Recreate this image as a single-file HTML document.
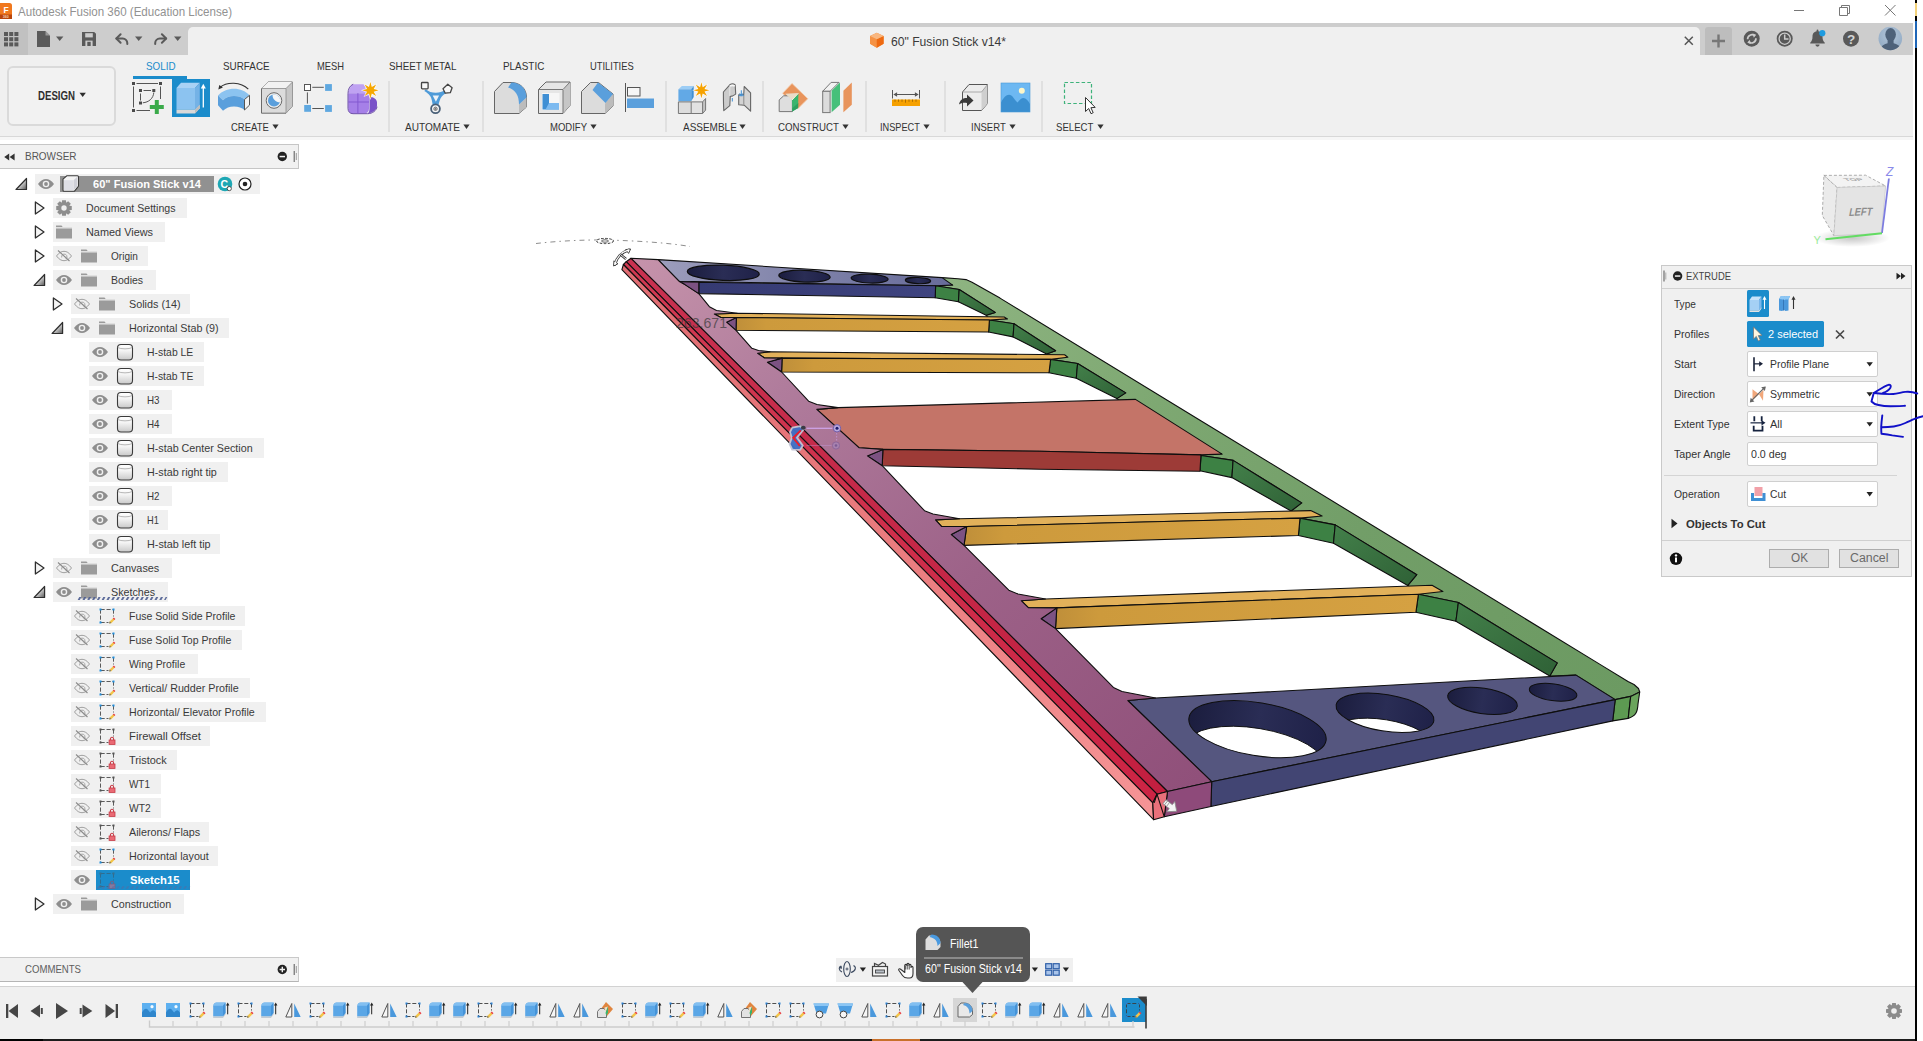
<!DOCTYPE html>
<html><head><meta charset="utf-8"><title>Autodesk Fusion 360</title>
<style>
html,body{margin:0;padding:0;}
body{width:1923px;height:1041px;overflow:hidden;background:#fff;position:relative;font-family:"Liberation Sans",sans-serif;}
.b{position:absolute;display:block;}
.t{position:absolute;white-space:nowrap;transform-origin:0 50%;}
</style></head><body>
<div class="b" style="left:0px;top:0px;width:1914px;height:23px;background:#fff;"></div>
<svg class="b" style="left:0px;top:3px;" width="12" height="16" viewBox="0 0 12 16"><rect x="-3" y="0" width="15" height="16" rx="2.5" fill="#f0781e"/><rect x="-3" y="11.5" width="15" height="4.5" fill="#b9450b"/><text x="3.4" y="9.800" font-size="8.500" font-weight="bold" fill="#fff" font-family="Liberation Sans, sans-serif">F</text><text x="2.800" y="15.200" font-size="3.600" font-weight="bold" fill="#f6d2b8" font-family="Liberation Sans, sans-serif">360</text></svg>
<span class="t" style="left:18px;top:3.0px;font-size:13px;line-height:17px;color:#929292;transform:scaleX(0.8892);">Autodesk Fusion 360 (Education License)</span>
<svg class="b" style="left:1785px;top:0px;" width="125" height="23" viewBox="0 0 125 23"><g stroke="#777" stroke-width="1" fill="none"><path d="M9 10.5h10"/><path d="M54.5 7.5h8v8h-8z"/><path d="M56.5 7.5v-2h8v8h-2"/><path d="M100 5l10.5 10.5M110.5 5l-10.5 10.5"/></g></svg>
<div class="b" style="left:0px;top:23px;width:1913px;height:32px;background:#cdcdcd;"></div>
<div class="b" style="left:0px;top:23px;width:28px;height:32px;background:#c1c1c1;"></div>
<div class="b" style="left:188px;top:27px;width:1512px;height:28px;background:#f0f0f0;border-radius:5px 5px 0 0;"></div>
<svg class="b" style="left:0px;top:27px;" width="190" height="26" viewBox="0 0 190 26">
<g fill="#5a5a5a">
<rect x="4" y="5" width="4" height="4"/><rect x="9.2" y="5" width="4" height="4"/><rect x="14.4" y="5" width="4" height="4"/>
<rect x="4" y="10.2" width="4" height="4"/><rect x="9.2" y="10.2" width="4" height="4"/><rect x="14.4" y="10.2" width="4" height="4"/>
<rect x="4" y="15.4" width="4" height="4"/><rect x="9.2" y="15.4" width="4" height="4"/><rect x="14.4" y="15.4" width="4" height="4"/>
<path d="M37 4h8.5l4.5 4.5v11.5h-13z"/>
<path d="M56 9.5h7.4l-3.7 4.6z"/>
<path d="M82 5h12.2l1.8 1.8v12.2h-14z"/>
<path d="M135 9.5h7.4l-3.7 4.6z"/>
<path d="M174 9.5h7.4l-3.7 4.6z"/>
</g>
<path d="M45.5 4v4.5h4.5" fill="#cdcdcd" opacity=".55"/>
<rect x="85.2" y="6.2" width="7.6" height="4.2" fill="#cdcdcd"/><rect x="85.4" y="13.6" width="7.2" height="5.4" fill="#cdcdcd"/><rect x="87.3" y="14.8" width="3.4" height="4.2" fill="#5a5a5a"/>
<g fill="none" stroke="#5a5a5a" stroke-width="2" stroke-linecap="round" stroke-linejoin="round">
<path d="M116.5 11.5h6.2a4.6 4.6 0 0 1 4.6 4.6v1"/><path d="M120.6 7.3l-4.3 4.2 4.3 4.2"/>
<path d="M166 11.5h-6.2a4.6 4.6 0 0 0-4.6 4.6v1"/><path d="M161.9 7.3l4.3 4.2-4.3 4.2"/>
</g></svg>
<svg class="b" style="left:869.3px;top:32.4px;" width="17" height="17" viewBox="0 0 17 17"><path d="M7.800 .8L14.600 4v7.800L7.800 15.800 1 11.800V4z" fill="#f28a32"/><path d="M1 4l6.800 3.200v8.600L1 11.800z" fill="#f59244"/><path d="M14.600 4L7.800 7.200v8.600l6.800-4z" fill="#ee6a12"/><path d="M7.800 .8L14.600 4 7.800 7.200 1 4z" fill="#f9b780"/></svg>
<span class="t" style="left:890.7px;top:34.2px;font-size:12.5px;line-height:16.5px;color:#3a3a3a;transform:scaleX(0.9714);">60&quot; Fusion Stick v14*</span>
<svg class="b" style="left:1683px;top:35px;" width="12" height="12" viewBox="0 0 12 12"><path d="M1.8 1.8l8 8M9.8 1.8l-8 8" stroke="#555" stroke-width="1.5" fill="none"/></svg>
<div class="b" style="left:1705px;top:27px;width:27px;height:28px;background:#bdbdbd;border-radius:3px 3px 0 0;"></div>
<svg class="b" style="left:1705px;top:27px;" width="27" height="28" viewBox="0 0 27 28"><path d="M13.5 7.5v13M7 14h13" stroke="#777" stroke-width="2.4" fill="none"/></svg>
<svg class="b" style="left:1740px;top:26.4px;" width="172" height="28" viewBox="0 0 172 28">
<circle cx="11.7" cy="12.7" r="8" fill="#595959"/>
<path d="M7.6 13.2a4.3 4.3 0 0 1 7.2-3.3M15.9 12.3a4.3 4.3 0 0 1-7.3 3.4" stroke="#cdcdcd" stroke-width="1.7" fill="none"/><path d="M12.6 7.4l3.6 1.3-2.4 3z" fill="#cdcdcd"/><path d="M10.9 18.1l-3.6-1.3 2.4-3z" fill="#cdcdcd"/>
<circle cx="44.7" cy="12.7" r="8" fill="#595959"/><circle cx="44.7" cy="12.7" r="5.6" fill="none" stroke="#cdcdcd" stroke-width="1.3"/><path d="M44.7 8.6v4.4h3.8" stroke="#cdcdcd" stroke-width="1.5" fill="none"/>
<path d="M77.5 5.2c3.4 0 5 2.4 5 5.4 0 3 .6 4.6 2.3 6.1v.9H70.2v-.9c1.7-1.5 2.3-3.1 2.3-6.1 0-3 1.6-5.4 5-5.4z" fill="#595959"/><path d="M75.4 18.6h4.2a2.1 2.1 0 0 1-4.2 0z" fill="#595959"/><rect x="76.6" y="3.6" width="1.8" height="2.4" rx=".9" fill="#595959"/>
<circle cx="82.3" cy="7.2" r="3.1" fill="#1e9be0"/>
<circle cx="111" cy="12.7" r="8" fill="#595959"/>
<text x="111" y="17.6" text-anchor="middle" font-size="13.5" font-weight="bold" fill="#d4d4d4" font-family="Liberation Sans, sans-serif">?</text>
<defs><radialGradient id="av" cx=".5" cy=".35" r=".7"><stop offset="0" stop-color="#b3c6da"/><stop offset="1" stop-color="#8fa8c2"/></radialGradient><clipPath id="avc"><circle cx="150.3" cy="12.5" r="11.8"/></clipPath></defs>
<circle cx="150.3" cy="12.5" r="11.8" fill="url(#av)"/>
<g clip-path="url(#avc)" fill="#4e627a"><ellipse cx="150.6" cy="8.6" rx="5.3" ry="6.6"/><path d="M147.6 13h6v4.2c3.4.8 5.8 2.2 6.6 4.2v4h-19v-4c.8-2 3-3.4 6.4-4.2z"/></g>
</svg>
<div class="b" style="left:0px;top:55px;width:1913px;height:81px;background:#f0f0f0;"></div>
<div class="b" style="left:0px;top:136px;width:1913px;height:1.2px;background:#d8d8d8;"></div>
<div class="b" style="left:0px;top:137.2px;width:1913px;height:2.6px;background:#f6f6f6;"></div>
<div class="b" style="left:7px;top:66px;width:109px;height:60px;background:#f2f2f2;border:2px solid #dadada;border-radius:6px;box-sizing:border-box;"></div>
<span class="t" style="left:37.5px;top:88.0px;font-size:12px;line-height:16px;color:#2e2e2e;font-weight:bold;transform:scaleX(0.8042);">DESIGN</span>
<svg class="b" style="left:79px;top:92px;" width="8" height="6" viewBox="0 0 8 6"><path d="M0.5 0.8h6.4l-3.2 4.2z" fill="#2e2e2e"/></svg>
<span class="t" style="left:145.5px;top:58.8px;font-size:11.5px;line-height:15.5px;color:#1b8ccb;transform:scaleX(0.8548);">SOLID</span>
<span class="t" style="left:223.4px;top:58.8px;font-size:11.5px;line-height:15.5px;color:#333;transform:scaleX(0.8579);">SURFACE</span>
<span class="t" style="left:316.5px;top:58.8px;font-size:11.5px;line-height:15.5px;color:#333;transform:scaleX(0.8126);">MESH</span>
<span class="t" style="left:389.4px;top:58.8px;font-size:11.5px;line-height:15.5px;color:#333;transform:scaleX(0.8551);">SHEET METAL</span>
<span class="t" style="left:502.5px;top:58.8px;font-size:11.5px;line-height:15.5px;color:#333;transform:scaleX(0.8616);">PLASTIC</span>
<span class="t" style="left:590.3px;top:58.8px;font-size:11.5px;line-height:15.5px;color:#333;transform:scaleX(0.8141);">UTILITIES</span>
<div class="b" style="left:133px;top:76px;width:54px;height:3.4px;background:#1b8ccb;"></div>
<span class="t" style="left:230.6px;top:119.8px;font-size:11.5px;line-height:15.5px;color:#333;transform:scaleX(0.8276);">CREATE</span>
<svg class="b" style="left:271.5px;top:124px;" width="8" height="6" viewBox="0 0 8 6"><path d="M0.4 0.6h6.2l-3.1 4.3z" fill="#333"/></svg>
<span class="t" style="left:404.6px;top:119.8px;font-size:11.5px;line-height:15.5px;color:#333;transform:scaleX(0.8754);">AUTOMATE</span>
<svg class="b" style="left:462.6px;top:124px;" width="8" height="6" viewBox="0 0 8 6"><path d="M0.4 0.6h6.2l-3.1 4.3z" fill="#333"/></svg>
<span class="t" style="left:549.7px;top:119.8px;font-size:11.5px;line-height:15.5px;color:#333;transform:scaleX(0.8274);">MODIFY</span>
<svg class="b" style="left:589.7px;top:124px;" width="8" height="6" viewBox="0 0 8 6"><path d="M0.4 0.6h6.2l-3.1 4.3z" fill="#333"/></svg>
<span class="t" style="left:682.6px;top:119.8px;font-size:11.5px;line-height:15.5px;color:#333;transform:scaleX(0.8677);">ASSEMBLE</span>
<svg class="b" style="left:739.4px;top:124px;" width="8" height="6" viewBox="0 0 8 6"><path d="M0.4 0.6h6.2l-3.1 4.3z" fill="#333"/></svg>
<span class="t" style="left:777.8px;top:119.8px;font-size:11.5px;line-height:15.5px;color:#333;transform:scaleX(0.8422);">CONSTRUCT</span>
<svg class="b" style="left:841.6px;top:124px;" width="8" height="6" viewBox="0 0 8 6"><path d="M0.4 0.6h6.2l-3.1 4.3z" fill="#333"/></svg>
<span class="t" style="left:880.4px;top:119.8px;font-size:11.5px;line-height:15.5px;color:#333;transform:scaleX(0.7985);">INSPECT</span>
<svg class="b" style="left:923.2px;top:124px;" width="8" height="6" viewBox="0 0 8 6"><path d="M0.4 0.6h6.2l-3.1 4.3z" fill="#333"/></svg>
<span class="t" style="left:971.3px;top:119.8px;font-size:11.5px;line-height:15.5px;color:#333;transform:scaleX(0.8269);">INSERT</span>
<svg class="b" style="left:1009px;top:124px;" width="8" height="6" viewBox="0 0 8 6"><path d="M0.4 0.6h6.2l-3.1 4.3z" fill="#333"/></svg>
<span class="t" style="left:1056.4px;top:119.8px;font-size:11.5px;line-height:15.5px;color:#333;transform:scaleX(0.8360);">SELECT</span>
<svg class="b" style="left:1096.8px;top:124px;" width="8" height="6" viewBox="0 0 8 6"><path d="M0.4 0.6h6.2l-3.1 4.3z" fill="#333"/></svg>
<div class="b" style="left:388px;top:81px;width:2px;height:51px;background:#e0e0e0;"></div>
<div class="b" style="left:482px;top:81px;width:2px;height:51px;background:#e0e0e0;"></div>
<div class="b" style="left:665px;top:81px;width:2px;height:51px;background:#e0e0e0;"></div>
<div class="b" style="left:762px;top:81px;width:2px;height:51px;background:#e0e0e0;"></div>
<div class="b" style="left:865px;top:81px;width:2px;height:51px;background:#e0e0e0;"></div>
<div class="b" style="left:944px;top:81px;width:2px;height:51px;background:#e0e0e0;"></div>
<div class="b" style="left:1041px;top:81px;width:2px;height:51px;background:#e0e0e0;"></div>
<div class="b" style="left:172px;top:79px;width:38px;height:38px;background:#1b8ccb;"></div>
<svg class="b" style="left:0px;top:55px;" width="1200" height="82" viewBox="0 55 1200 82"><g stroke="#555" stroke-width="1" fill="none"><path d="M136.500 83.500h21.500M133.500 86.500v21M136.500 110.500h13.500M160.500 86.500v12.500"/><path d="M143.500 90.500h7.500M140.500 93.500v7M153.800 92.500c-.5 6-5 9.800-11 10.300"/></g>
<g fill="#4a4a4a"><rect x="132" y="82" width="3" height="3"/><rect x="159" y="82" width="3" height="3"/><rect x="132" y="109" width="3" height="3"/><rect x="139" y="89" width="3" height="3"/><rect x="152.300" y="89" width="3" height="3"/><rect x="139" y="101.500" width="3" height="3"/></g>
<path d="M154.800 100h4v5h5v4h-5v5h-4v-5h-5v-4h5z" fill="#3aaa4a"/>
<path d="M176.500 88l4.500-5.300h18.800l-4.800 5.300z" fill="#a9d2f5"/><path d="M195 88l4.800-5.300v22l-4.800 5z" fill="#74b2e6"/><rect x="176.500" y="88" width="18.500" height="21.700" fill="#8cc3f0"/>
<path d="M176.500 109.700h18.500l4.800-5v3.600l-4.800 5.200h-18.500z" fill="#d9d9d9"/><path d="M195 109.700l4.800-5v3.600l-4.800 5.200z" fill="#bdbdbd"/>
<path d="M203.300 107.500v-21" stroke="#fff" stroke-width="1.300"/><path d="M200.800 88.600l2.500-4.800 2.500 4.800z" fill="#fff"/>
<path d="M218 95.500c4-4.500 10-6.800 16-6.800s11.500 2.300 15.500 6.600l-5 4.200c-2.500-2.300-6-3.400-10.500-3.400s-8 1.400-11 4.200z" fill="#8cc3f0"/>
<path d="M218 95.500l5 4.800c3-2.800 6.500-4.200 11-4.200s8 1.100 10.500 3.400v10.500c-2.500-2.300-6-3.600-10.500-3.600s-8 1.400-11 4.300l-5-5.400z" fill="#5a9fdc"/>
<path d="M244.500 99.500l5-4.200v9.800l-5 4.900z" fill="#f4f4f4" stroke="#555" stroke-width="1"/>
<path d="M219.800 87.500c7-6 21-6 28.500 1.700" fill="none" stroke="#333" stroke-width="1.100"/><path d="M218.300 89.500l1-4.600 3.600 2.600z" fill="#333"/>
<path d="M261.500 88.500l6.500-6.500h24.500v24l-6.500 7.200h-24.500z" fill="#dcdcdc" stroke="#6a6a6a" stroke-width="1"/><path d="M261.500 88.500l6.500-6.500h24.500l-6.500 6.500z" fill="#f2f2f2"/><path d="M286 88.500l6.500-6.500v24l-6.500 7.200z" fill="#c6c6c6"/><path d="M261.500 88.500h24.500l6.500-6.500M286 88.500v24.500" fill="none" stroke="#8a8a8a" stroke-width=".8"/>
<circle cx="274" cy="100.500" r="7.800" fill="#ececec" stroke="#6a6a6a" stroke-width="1"/><circle cx="274" cy="100.500" r="6" fill="#5a9fdc"/><path d="M272.600 94.700a6 6 0 0 1 7.200 7.600c-4-.2-7.600-3.400-7.200-7.600z" fill="#f6f6f6"/>
<g stroke="#555" stroke-width="1" fill="none"><path d="M312.300 87.300h11.500M307.400 92.400v11.200M312.300 108.500h11.500"/></g><rect x="304.500" y="84.500" width="6" height="6" fill="#fff" stroke="#555"/><rect x="325.100" y="84.100" width="6.800" height="6.800" fill="#5fa8e0"/><rect x="304.200" y="105" width="6.800" height="6.800" fill="#5fa8e0"/><rect x="325.100" y="105.100" width="6.800" height="6.800" fill="#5fa8e0"/>
<path d="M353 84.200h10.500l6.500 9h-21.500c.500-4.500 2-7.500 4.500-9z" fill="#bfa2f2"/>
<path d="M348.300 93.200h20.700v15.500c0 3-2 4.800-5 4.800h-11c-3 0-4.700-2-4.700-5z" fill="#a680e8"/>
<path d="M369.500 96.500c4 .5 7.500 2.500 7.500 6v3c0 4-4 7.500-9.500 8 1.500-1 2-2.500 2-4.800z" fill="#7a52c8"/>
<path d="M353.200 84.200c-3.500 1.500-5.200 5-5.200 9.500v14.800c0 3.200 2 5.200 5 5.200h14.500c5 0 9-3.200 9.500-7" fill="none" stroke="#6d4ea8" stroke-width="1"/>
<path d="M357.900 93.200v20.300M348.300 102h20.700" stroke="#8258d0" stroke-width="1" fill="none"/>
<path d="M370.4 80.7 L372.3 85.7 L377.2 83.5 L375.0 88.4 L380.0 90.3 L375.0 92.2 L377.2 97.1 L372.3 94.9 L370.4 99.9 L368.5 94.9 L363.6 97.1 L365.8 92.2 L360.8 90.3 L365.8 88.4 L363.6 83.5 L368.5 85.7Z" fill="#fff" opacity=".75"/><path d="M370.4 82.1 L371.8 87.0 L376.2 84.5 L373.7 88.9 L378.6 90.3 L373.7 91.7 L376.2 96.1 L371.8 93.6 L370.4 98.5 L369.0 93.6 L364.6 96.1 L367.1 91.7 L362.2 90.3 L367.1 88.9 L364.6 84.5 L369.0 87.0Z" fill="#f6a700"/>
<path d="M425.800 89.300C428.500 91.800 432 92.700 435.800 92.700C439.500 92.700 442.500 91.700 444.600 90.200L446.200 93.200C442.800 94.600 440.600 97.200 439.700 100.500L438.400 105H432.700L431.900 100.500C431.300 96.800 429.200 93.800 424.300 91Z" fill="#4f9bd8"/><path d="M432.700 95.400h6.400l-3.200 6.400z" fill="#eef3f8"/>
<rect x="421.500" y="82.500" width="6.600" height="6.400" rx=".8" fill="#f8f8f8" stroke="#444" stroke-width="1.300"/><path d="M447.800 84.300l4.300 3.400-1.800 5-5 .5-2.300-4.400z" fill="#f8f8f8" stroke="#444" stroke-width="1.300" stroke-linejoin="round"/>
<circle cx="435.500" cy="108.800" r="4.400" fill="#f4f4f4" stroke="#4a6078" stroke-width="1.800"/><circle cx="435.500" cy="108.800" r="1.700" fill="none" stroke="#555" stroke-width=".8"/><path d="M434.300 108.800h2.400M435.500 107.600v2.400" stroke="#555" stroke-width=".6"/>
<path d="M494.500 91.500l8.500-9h8c9 0 15.500 6 15.500 15v9.500l-7.500 6.500h-24.500z" fill="#dcdcdc" stroke="#666" stroke-width="1"/><path d="M519 113.500v-9l7.500-7v9.500z" fill="#bcbcbc"/>
<path d="M508 87.500l3.500-5c9 0 15 6.500 15 15l-7.500 7c0-8.500-3-14.500-11-17z" fill="#5a9fdc"/>
<path d="M538.500 89.500l7.500-7.500h24v23.500l-7 8h-24.500z" fill="#e6e6e6" stroke="#666" stroke-width="1"/><path d="M563 90l7-8v23.500l-7 8z" fill="#c6c6c6"/><path d="M538.500 89.500h24.500l7-7.500M563 90v23" fill="none" stroke="#777" stroke-width="1"/>
<rect x="542" y="93" width="17.500" height="17" fill="#f6f6f6"/><path d="M542.500 94h6.500v9h10v6.500h-16.500z" fill="#3f8fd4"/><path d="M549 103h10v6.500h-13.500z" fill="#7cbaf0"/>
<path d="M581.500 91.500l9-9h8l14.500 11.500v12l-8 7.500h-23.500z" fill="#dcdcdc" stroke="#666" stroke-width="1"/><path d="M605 113.500v-10l8-9.500v12z" fill="#bcbcbc"/><path d="M592.500 90l5.500-7.500 15 11.500-7.500 9z" fill="#5a9fdc"/>
<path d="M625.500 83v29" stroke="#555" stroke-width="1" fill="none"/><rect x="627.500" y="87.500" width="12.500" height="8.500" fill="#f6f6f6" stroke="#555"/><rect x="627" y="98.500" width="27" height="9.500" fill="#5a9fdc"/>
<path d="M678.400 89.300l3.500-3.400h11.800l-2.500 3.400z" fill="#9ccdf5"/><path d="M691.200 89.300l2.500-3.400v11l-2.500 4.300z" fill="#3f8fd4"/><rect x="678.400" y="89.300" width="12.800" height="12" fill="#62a9e6"/>
<rect x="678.400" y="101.900" width="12.800" height="11.600" fill="#dddddd"/><rect x="691.200" y="101.900" width="11.400" height="11.600" fill="#e2e2e2"/><path d="M691.200 101.900l3-3.400h11.400l-3 3.400z" fill="#f0f0f0"/><path d="M702.600 101.900l3-3.400v11.600l-3 3.400z" fill="#c4c4c4"/>
<path d="M678.400 101.900v11.600h24.200l3-3.400v-11.600M691.200 101.900v11.600M678.400 101.900h24.200l3-3.400M702.600 101.900v11.600" fill="none" stroke="#777" stroke-width="1"/>
<path d="M701.4 81.0 L703.2 85.9 L708.0 83.7 L705.8 88.5 L710.7 90.3 L705.8 92.1 L708.0 96.9 L703.2 94.7 L701.4 99.6 L699.6 94.7 L694.8 96.9 L697.0 92.1 L692.1 90.3 L697.0 88.5 L694.8 83.7 L699.6 85.9Z" fill="#fff" opacity=".7"/><path d="M701.4 82.3 L702.7 87.2 L707.1 84.6 L704.5 89.0 L709.4 90.3 L704.5 91.6 L707.1 96.0 L702.7 93.4 L701.4 98.3 L700.1 93.4 L695.7 96.0 L698.3 91.6 L693.4 90.3 L698.3 89.0 L695.7 84.6 L700.1 87.2Z" fill="#f6a200"/>
<path d="M723.400 92l6.400-7.200c1.500-1 4-1 5.400.1l.5 9.200-3.400 2-2 .1-.5 9.400-6 5c-.4-6-.4-12-.4-18.600z" fill="#cbcbcb" stroke="#666" stroke-width="1.100" stroke-linejoin="round"/><path d="M729.800 86.200c1.500-1 3.500-1 5 0" stroke="#f6f6f6" stroke-width="1.600" fill="none"/><path d="M729.800 86.500v9.500" stroke="#e4e4e4" stroke-width="1"/>
<path d="M744.200 86.500l6.400 6.400v18.300l-6.400-6-5.500-.5v-9.900l5 0z" fill="#d3d3d3" stroke="#666" stroke-width="1.100" stroke-linejoin="round"/><path d="M743.800 95v9.800" stroke="#8a8a8a" stroke-width="1"/><path d="M738.700 95.200c1.500.8 3.500.8 5.200 0" stroke="#3f8fd4" stroke-width="1" fill="none"/>
<path d="M741.300 90.300v5M739.600 93.300l1.700 2.200 1.700-2.200M732.300 98v3.500" stroke="#3f8fd4" stroke-width="1" fill="none"/>
<path d="M792 83.400l15.800 15.300-9.800 9.900-15.400-15.300z" fill="#e8945c"/><path d="M792 83.400l15.800 15.300-9.800 9.900-15.400-15.300z" fill="none" stroke="#f3c9a8" stroke-width=".8"/>
<path d="M779.200 99.900l4.500-4.100h7.300l1.400 4v11.800h-13.200z" fill="#dedede" stroke="#777" stroke-width="1"/>
<path d="M785.200 93.800l13-.8-6.200 7z" fill="#e9dcc8"/><path d="M792 100l6.400-6.500-.3 14.500-5.800 3.600z" fill="#3bb56e"/><path d="M798.300 93.300l-6.300 6.700" stroke="#f6f6e0" stroke-width="1"/><path d="M792.300 111.600l5.800-3.600.2-5-6 5.200z" fill="#2da060"/>
<path d="M822.700 91.300l8.400-8.900h7.900l-8.900 8.900z" fill="#f2f2f2" stroke="#777" stroke-width="1" stroke-linejoin="round"/><rect x="822.700" y="91.300" width="7.400" height="21.300" fill="#dcdcdc" stroke="#777" stroke-width="1"/>
<path d="M831.600 90.800l8.400-8.400v22.300l-8.400 7.500z" fill="#46c07a"/><path d="M843.400 90.800l8.400-8.400v22.300l-8.400 7.500z" fill="#e8945c"/>
<rect x="892" y="99.500" width="28" height="6.500" fill="#f6a100"/><g stroke="#a66a00" stroke-width=".9"><path d="M895 99.500v2.300M898.500 99.500v2.300M902 99.500v2.300M905.500 99.500v3.200M909 99.500v2.300M912.500 99.500v2.300M916 99.500v2.300"/></g>
<g stroke="#555" stroke-width="1" fill="none"><path d="M892.500 90v8.500M919.500 90v8.500M894.500 94.500h23"/></g><path d="M893.300 94.500l3.800-2.200v4.400zM918.700 94.500l-3.800-2.200v4.400z" fill="#555"/>
<path d="M962.500 92l6.500-7.500h18.500v19l-6 7h-19z" fill="#ececec" stroke="#555" stroke-width="1"/><path d="M981.500 92l6-7.500v19l-6 7z" fill="#cfcfcf"/><path d="M962.500 92h19l6-7.500" fill="none" stroke="#999" stroke-width=".8"/>
<path d="M959 104.500c1-5 4-6.500 8-6.500v-3.500l6.500 6-6.500 6v-3.500c-3.500-.5-6 0-8 1.500z" fill="#3a3a3a"/>
<rect x="1001" y="83" width="29" height="29" fill="#6db8f2"/><path d="M1001 102.500c2.500-5 5-7.800 8-7.800 3.500 0 5 4.500 8.500 7.800 2-2.500 4-4.500 6-4.500 2.500 0 4.500 2.500 6.500 6v8h-29z" fill="#3b8fd0"/><circle cx="1021.800" cy="90.800" r="3" fill="#fdf6c9"/><rect x="1001" y="83" width="29" height="29" fill="none" stroke="#4a9ad8" stroke-width=".6"/>
<rect x="1064.500" y="82.500" width="27" height="21" fill="none" stroke="#3db27a" stroke-width="1.200" stroke-dasharray="3.500 2.200"/><path d="M1085.500 97.500v14l3.200-3 2.300 5.200 2.200-1-2.300-5 4.300-.3z" fill="#fff" stroke="#333" stroke-width="1"/></svg>
<div class="b" style="left:0px;top:144px;width:299px;height:25px;background:#f1f1f1;border:1px solid #c6c6c6;border-left:none;box-sizing:border-box;"></div>
<svg class="b" style="left:3px;top:152px;" width="13" height="10" viewBox="0 0 13 10"><path d="M6.2 1.6v6.800l-5-3.400zM11.600 1.600v6.800l-5-3.400z" fill="#333"/></svg>
<span class="t" style="left:24.5px;top:149.0px;font-size:11px;line-height:15px;color:#555;transform:scaleX(0.9061);">BROWSER</span>
<svg class="b" style="left:276px;top:150px;" width="24" height="13" viewBox="0 0 24 13"><circle cx="6.300" cy="6.500" r="4.700" fill="#222"/><rect x="3.600" y="5.800" width="5.400" height="1.500" fill="#f1f1f1"/><path d="M18.200 1v11" stroke="#555" stroke-width="1"/><path d="M20.300 3v7" stroke="#999" stroke-width="1"/></svg>
<div class="b" style="left:35px;top:174.3px;width:225px;height:19.5px;background:#f0f0f0;"></div>
<div class="b" style="left:60px;top:176px;width:154px;height:16px;background:#919191;"></div>
<span class="t" style="left:93px;top:176.6px;font-size:11.5px;line-height:15.5px;color:#fff;font-weight:bold;transform:scaleX(0.9626);">60&quot; Fusion Stick v14</span>
<div class="b" style="left:53px;top:198px;width:134.2px;height:19.7px;background:#f0f0f0;"></div>
<span class="t" style="left:86.2px;top:200.6px;font-size:11.5px;line-height:15.5px;color:#3a3a3a;transform:scaleX(0.9211);">Document Settings</span>
<div class="b" style="left:53px;top:222px;width:111.69999999999999px;height:19.7px;background:#f0f0f0;"></div>
<span class="t" style="left:86.2px;top:224.6px;font-size:11.5px;line-height:15.5px;color:#3a3a3a;transform:scaleX(0.9472);">Named Views</span>
<div class="b" style="left:53px;top:246px;width:94.5px;height:19.7px;background:#f0f0f0;"></div>
<span class="t" style="left:111.4px;top:248.6px;font-size:11.5px;line-height:15.5px;color:#3a3a3a;transform:scaleX(0.8736);">Origin</span>
<div class="b" style="left:53px;top:270px;width:102.6px;height:19.7px;background:#f0f0f0;"></div>
<span class="t" style="left:111.4px;top:272.6px;font-size:11.5px;line-height:15.5px;color:#3a3a3a;transform:scaleX(0.9129);">Bodies</span>
<div class="b" style="left:71px;top:294px;width:118.5px;height:19.7px;background:#f0f0f0;"></div>
<span class="t" style="left:129.3px;top:296.6px;font-size:11.5px;line-height:15.5px;color:#3a3a3a;transform:scaleX(0.9387);">Solids (14)</span>
<div class="b" style="left:71px;top:318px;width:158.4px;height:19.7px;background:#f0f0f0;"></div>
<span class="t" style="left:129.3px;top:320.6px;font-size:11.5px;line-height:15.5px;color:#3a3a3a;transform:scaleX(0.9345);">Horizontal Stab (9)</span>
<div class="b" style="left:89px;top:342px;width:114.6px;height:19.7px;background:#f0f0f0;"></div>
<span class="t" style="left:147.2px;top:344.6px;font-size:11.5px;line-height:15.5px;color:#3a3a3a;transform:scaleX(0.9055);">H-stab LE</span>
<div class="b" style="left:89px;top:366px;width:114.6px;height:19.7px;background:#f0f0f0;"></div>
<span class="t" style="left:147.2px;top:368.6px;font-size:11.5px;line-height:15.5px;color:#3a3a3a;transform:scaleX(0.8981);">H-stab TE</span>
<div class="b" style="left:89px;top:390px;width:82.69999999999999px;height:19.7px;background:#f0f0f0;"></div>
<span class="t" style="left:147.2px;top:392.6px;font-size:11.5px;line-height:15.5px;color:#3a3a3a;transform:scaleX(0.8503);">H3</span>
<div class="b" style="left:89px;top:414px;width:82.69999999999999px;height:19.7px;background:#f0f0f0;"></div>
<span class="t" style="left:147.2px;top:416.6px;font-size:11.5px;line-height:15.5px;color:#3a3a3a;transform:scaleX(0.8503);">H4</span>
<div class="b" style="left:89px;top:438px;width:174.8px;height:19.7px;background:#f0f0f0;"></div>
<span class="t" style="left:147.2px;top:440.6px;font-size:11.5px;line-height:15.5px;color:#3a3a3a;transform:scaleX(0.9334);">H-stab Center Section</span>
<div class="b" style="left:89px;top:462px;width:138.6px;height:19.7px;background:#f0f0f0;"></div>
<span class="t" style="left:147.2px;top:464.6px;font-size:11.5px;line-height:15.5px;color:#3a3a3a;transform:scaleX(0.9334);">H-stab right tip</span>
<div class="b" style="left:89px;top:486px;width:82.69999999999999px;height:19.7px;background:#f0f0f0;"></div>
<span class="t" style="left:147.2px;top:488.6px;font-size:11.5px;line-height:15.5px;color:#3a3a3a;transform:scaleX(0.8503);">H2</span>
<div class="b" style="left:89px;top:510px;width:78.69999999999999px;height:19.7px;background:#f0f0f0;"></div>
<span class="t" style="left:147.2px;top:512.5px;font-size:11.5px;line-height:15.5px;color:#3a3a3a;transform:scaleX(0.8027);">H1</span>
<div class="b" style="left:89px;top:534px;width:130.6px;height:19.7px;background:#f0f0f0;"></div>
<span class="t" style="left:147.2px;top:536.5px;font-size:11.5px;line-height:15.5px;color:#3a3a3a;transform:scaleX(0.9388);">H-stab left tip</span>
<div class="b" style="left:53px;top:558px;width:118.69999999999999px;height:19.7px;background:#f0f0f0;"></div>
<span class="t" style="left:111.4px;top:560.5px;font-size:11.5px;line-height:15.5px;color:#3a3a3a;transform:scaleX(0.9445);">Canvases</span>
<div class="b" style="left:53px;top:582px;width:114.69999999999999px;height:19.7px;background:#f0f0f0;"></div>
<span class="t" style="left:111.4px;top:584.5px;font-size:11.5px;line-height:15.5px;color:#3a3a3a;transform:scaleX(0.9323);">Sketches</span>
<div class="b" style="left:71px;top:606px;width:174.4px;height:19.7px;background:#f0f0f0;"></div>
<span class="t" style="left:129.3px;top:608.5px;font-size:11.5px;line-height:15.5px;color:#3a3a3a;transform:scaleX(0.9146);">Fuse Solid Side Profile</span>
<div class="b" style="left:71px;top:630px;width:170.5px;height:19.7px;background:#f0f0f0;"></div>
<span class="t" style="left:129.3px;top:632.5px;font-size:11.5px;line-height:15.5px;color:#3a3a3a;transform:scaleX(0.9162);">Fuse Solid Top Profile</span>
<div class="b" style="left:71px;top:654px;width:126.69999999999999px;height:19.7px;background:#f0f0f0;"></div>
<span class="t" style="left:129.3px;top:656.5px;font-size:11.5px;line-height:15.5px;color:#3a3a3a;transform:scaleX(0.9065);">Wing Profile</span>
<div class="b" style="left:71px;top:678px;width:178.5px;height:19.7px;background:#f0f0f0;"></div>
<span class="t" style="left:129.3px;top:680.5px;font-size:11.5px;line-height:15.5px;color:#3a3a3a;transform:scaleX(0.9327);">Vertical/ Rudder Profile</span>
<div class="b" style="left:71px;top:702px;width:194.7px;height:19.7px;background:#f0f0f0;"></div>
<span class="t" style="left:129.3px;top:704.5px;font-size:11.5px;line-height:15.5px;color:#3a3a3a;transform:scaleX(0.9233);">Horizontal/ Elevator Profile</span>
<div class="b" style="left:71px;top:726px;width:138.7px;height:19.7px;background:#f0f0f0;"></div>
<span class="t" style="left:129.3px;top:728.5px;font-size:11.5px;line-height:15.5px;color:#3a3a3a;transform:scaleX(0.9812);">Firewall Offset</span>
<div class="b" style="left:71px;top:750px;width:106.4px;height:19.7px;background:#f0f0f0;"></div>
<span class="t" style="left:129.3px;top:752.5px;font-size:11.5px;line-height:15.5px;color:#3a3a3a;transform:scaleX(0.9467);">Tristock</span>
<div class="b" style="left:71px;top:774px;width:90.30000000000001px;height:19.7px;background:#f0f0f0;"></div>
<span class="t" style="left:129.3px;top:776.5px;font-size:11.5px;line-height:15.5px;color:#3a3a3a;transform:scaleX(0.8610);">WT1</span>
<div class="b" style="left:71px;top:798px;width:90.30000000000001px;height:19.7px;background:#f0f0f0;"></div>
<span class="t" style="left:129.3px;top:800.5px;font-size:11.5px;line-height:15.5px;color:#3a3a3a;transform:scaleX(0.8939);">WT2</span>
<div class="b" style="left:71px;top:822px;width:138.2px;height:19.7px;background:#f0f0f0;"></div>
<span class="t" style="left:129.3px;top:824.5px;font-size:11.5px;line-height:15.5px;color:#3a3a3a;transform:scaleX(0.9361);">Ailerons/ Flaps</span>
<div class="b" style="left:71px;top:846px;width:146.6px;height:19.7px;background:#f0f0f0;"></div>
<span class="t" style="left:129.3px;top:848.5px;font-size:11.5px;line-height:15.5px;color:#3a3a3a;transform:scaleX(0.9316);">Horizontal layout</span>
<div class="b" style="left:71px;top:870px;width:119px;height:19.7px;background:#f0f0f0;"></div>
<div class="b" style="left:96px;top:870px;width:94px;height:20px;background:#1b8ccb;"></div>
<span class="t" style="left:130.0px;top:872.5px;font-size:11.5px;line-height:15.5px;color:#fff;font-weight:bold;transform:scaleX(0.9781);">Sketch15</span>
<div class="b" style="left:53px;top:894px;width:130.7px;height:19.7px;background:#f0f0f0;"></div>
<span class="t" style="left:111.4px;top:896.5px;font-size:11.5px;line-height:15.5px;color:#3a3a3a;transform:scaleX(0.9309);">Construction</span>
<svg class="b" style="left:0px;top:170px;" width="300" height="760" viewBox="0 170 300 760"><defs><linearGradient id="ge" x1="0" y1="0" x2="1" y2="1"><stop offset=".35" stop-color="#f4f4f4"/><stop offset="1" stop-color="#555"/></linearGradient><linearGradient id="gb" x1="0" y1="0" x2="0" y2="1"><stop offset="0" stop-color="#fff"/><stop offset=".4" stop-color="#f4f4f4"/><stop offset="1" stop-color="#c9c9c9"/></linearGradient></defs><path d="M26.5 178.5v11h-10.500z" fill="url(#ge)" stroke="#2e2e2e" stroke-width="1.200" stroke-linejoin="round"/>
<g transform="translate(46,184)"><path d="M-8 0c2.500-3.600 5.200-5 8-5s5.500 1.400 8 5c-2.500 3.600-5.200 5-8 5s-5.500-1.400-8-5z" fill="#8e8e8e"/><circle r="3.300" fill="#f0f0f0"/><circle r="1.900" fill="#8e8e8e"/></g>
<g transform="translate(70.5,183.7)"><path d="M-7.500-4.500l4-3.500h10.500c.8 0 1 .300 1 1v9.500l-4 5h-10.500c-.7 0-1-.400-1-1z" fill="#f4f4f4" stroke="#3a3a3a" stroke-width="1.100" stroke-linejoin="round"/><path d="M-6.500-3.500h9v10h-9z" fill="#dedfe6"/><path d="M3-3.500l3.800-3.500v9.500l-3.800 4z" fill="#cfd0d8"/></g>
<circle cx="225" cy="184" r="7.300" fill="#1ea7b4"/><text x="224.300" y="188" text-anchor="middle" font-size="10.500" font-weight="bold" fill="#fff" font-family="Liberation Sans, sans-serif">C</text><circle cx="229.300" cy="188.600" r="2.100" fill="#fff" stroke="#333" stroke-width=".8"/>
<circle cx="245" cy="184" r="6" fill="#fff" stroke="#222" stroke-width="1.200"/><circle cx="245" cy="184" r="2.300" fill="#222"/>
<path d="M35.4 202l8.600 6-8.600 6z" fill="#f4f4f4" stroke="#2e2e2e" stroke-width="1.300" stroke-linejoin="round"/>
<path d="M71.77 206.10 L71.77 209.90 L69.25 210.22 L69.28 210.14 L70.84 212.15 L68.15 214.84 L66.14 213.28 L66.22 213.25 L65.90 215.77 L62.10 215.77 L61.78 213.25 L61.86 213.28 L59.85 214.84 L57.16 212.15 L58.72 210.14 L58.75 210.22 L56.23 209.90 L56.23 206.10 L58.75 205.78 L58.72 205.86 L57.16 203.85 L59.85 201.16 L61.86 202.72 L61.78 202.75 L62.10 200.23 L65.90 200.23 L66.22 202.75 L66.14 202.72 L68.15 201.16 L70.84 203.85 L69.28 205.86 L69.25 205.78Z" fill="#8e8e8e"/><circle cx="64" cy="208" r="2.700" fill="#f0f0f0"/>
<path d="M35.4 226l8.600 6-8.600 6z" fill="#f4f4f4" stroke="#2e2e2e" stroke-width="1.300" stroke-linejoin="round"/>
<path d="M56 228.5h16v10h-16z" fill="#9b9b9b"/><path d="M56 225.5h5.500l1.200 1.600h-6.700z" fill="#9b9b9b"/><path d="M56 227.7h16v.8h-16z" fill="#bdbdbd"/>
<path d="M35.4 250l8.600 6-8.600 6z" fill="#f4f4f4" stroke="#2e2e2e" stroke-width="1.300" stroke-linejoin="round"/>
<g transform="translate(64,256)" fill="none" stroke="#a0a0a0" stroke-width="1"><path d="M-7.500 0c2.500-3.400 5-4.700 7.500-4.700s5 1.300 7.500 4.700c-2.500 3.400-5 4.700-7.500 4.700s-5-1.300-7.500-4.700z"/><path d="M-2.300 1.500a2.700 2.700 0 1 1 4 1.600" stroke-width=".9"/><path d="M-6-5.500l11.500 10.500" stroke="#8a8a8a" stroke-width="1.100"/></g>
<path d="M81 252.5h16v10h-16z" fill="#9b9b9b"/><path d="M81 249.5h5.500l1.200 1.600h-6.700z" fill="#9b9b9b"/><path d="M81 251.7h16v.8h-16z" fill="#bdbdbd"/>
<path d="M44.6 274.5v11h-10.500z" fill="url(#ge)" stroke="#2e2e2e" stroke-width="1.200" stroke-linejoin="round"/>
<g transform="translate(64,280)"><path d="M-8 0c2.500-3.600 5.200-5 8-5s5.500 1.400 8 5c-2.500 3.600-5.200 5-8 5s-5.500-1.400-8-5z" fill="#8e8e8e"/><circle r="3.300" fill="#f0f0f0"/><circle r="1.900" fill="#8e8e8e"/></g>
<path d="M81 276.5h16v10h-16z" fill="#9b9b9b"/><path d="M81 273.5h5.500l1.200 1.600h-6.700z" fill="#9b9b9b"/><path d="M81 275.7h16v.8h-16z" fill="#bdbdbd"/>
<path d="M53.4 298l8.600 6-8.600 6z" fill="#f4f4f4" stroke="#2e2e2e" stroke-width="1.300" stroke-linejoin="round"/>
<g transform="translate(82,304)" fill="none" stroke="#a0a0a0" stroke-width="1"><path d="M-7.500 0c2.500-3.400 5-4.700 7.500-4.700s5 1.300 7.500 4.700c-2.500 3.400-5 4.700-7.500 4.700s-5-1.300-7.500-4.700z"/><path d="M-2.300 1.500a2.700 2.700 0 1 1 4 1.600" stroke-width=".9"/><path d="M-6-5.500l11.500 10.500" stroke="#8a8a8a" stroke-width="1.100"/></g>
<path d="M99 300.5h16v10h-16z" fill="#9b9b9b"/><path d="M99 297.5h5.500l1.200 1.600h-6.700z" fill="#9b9b9b"/><path d="M99 299.7h16v.8h-16z" fill="#bdbdbd"/>
<path d="M62.6 322.5v11h-10.500z" fill="url(#ge)" stroke="#2e2e2e" stroke-width="1.200" stroke-linejoin="round"/>
<g transform="translate(82,328)"><path d="M-8 0c2.500-3.600 5.200-5 8-5s5.500 1.400 8 5c-2.500 3.600-5.200 5-8 5s-5.500-1.400-8-5z" fill="#8e8e8e"/><circle r="3.300" fill="#f0f0f0"/><circle r="1.900" fill="#8e8e8e"/></g>
<path d="M99 324.5h16v10h-16z" fill="#9b9b9b"/><path d="M99 321.5h5.500l1.200 1.600h-6.700z" fill="#9b9b9b"/><path d="M99 323.7h16v.8h-16z" fill="#bdbdbd"/>
<g transform="translate(100,352)"><path d="M-8 0c2.500-3.600 5.200-5 8-5s5.500 1.400 8 5c-2.500 3.600-5.200 5-8 5s-5.500-1.400-8-5z" fill="#8e8e8e"/><circle r="3.300" fill="#f0f0f0"/><circle r="1.900" fill="#8e8e8e"/></g>
<g transform="translate(125,352)"><rect x="-7.500" y="-7.500" width="15" height="15.500" rx="3.500" fill="url(#gb)" stroke="#3a3a3a" stroke-width="1.100"/><path d="M-7.300-4.500c3 1.800 11.600 1.800 14.600 0" fill="none" stroke="#9a9a9a" stroke-width=".7"/></g>
<g transform="translate(100,376)"><path d="M-8 0c2.500-3.600 5.200-5 8-5s5.500 1.400 8 5c-2.500 3.600-5.200 5-8 5s-5.500-1.400-8-5z" fill="#8e8e8e"/><circle r="3.300" fill="#f0f0f0"/><circle r="1.900" fill="#8e8e8e"/></g>
<g transform="translate(125,376)"><rect x="-7.500" y="-7.500" width="15" height="15.500" rx="3.500" fill="url(#gb)" stroke="#3a3a3a" stroke-width="1.100"/><path d="M-7.300-4.500c3 1.800 11.600 1.800 14.600 0" fill="none" stroke="#9a9a9a" stroke-width=".7"/></g>
<g transform="translate(100,400)"><path d="M-8 0c2.500-3.600 5.200-5 8-5s5.500 1.400 8 5c-2.500 3.600-5.200 5-8 5s-5.500-1.400-8-5z" fill="#8e8e8e"/><circle r="3.300" fill="#f0f0f0"/><circle r="1.900" fill="#8e8e8e"/></g>
<g transform="translate(125,400)"><rect x="-7.500" y="-7.500" width="15" height="15.500" rx="3.500" fill="url(#gb)" stroke="#3a3a3a" stroke-width="1.100"/><path d="M-7.300-4.500c3 1.800 11.600 1.800 14.600 0" fill="none" stroke="#9a9a9a" stroke-width=".7"/></g>
<g transform="translate(100,424)"><path d="M-8 0c2.500-3.600 5.200-5 8-5s5.500 1.400 8 5c-2.500 3.600-5.200 5-8 5s-5.500-1.400-8-5z" fill="#8e8e8e"/><circle r="3.300" fill="#f0f0f0"/><circle r="1.900" fill="#8e8e8e"/></g>
<g transform="translate(125,424)"><rect x="-7.500" y="-7.500" width="15" height="15.500" rx="3.500" fill="url(#gb)" stroke="#3a3a3a" stroke-width="1.100"/><path d="M-7.300-4.500c3 1.800 11.600 1.800 14.600 0" fill="none" stroke="#9a9a9a" stroke-width=".7"/></g>
<g transform="translate(100,448)"><path d="M-8 0c2.500-3.600 5.200-5 8-5s5.500 1.400 8 5c-2.500 3.600-5.200 5-8 5s-5.500-1.400-8-5z" fill="#8e8e8e"/><circle r="3.300" fill="#f0f0f0"/><circle r="1.900" fill="#8e8e8e"/></g>
<g transform="translate(125,448)"><rect x="-7.500" y="-7.500" width="15" height="15.500" rx="3.500" fill="url(#gb)" stroke="#3a3a3a" stroke-width="1.100"/><path d="M-7.300-4.500c3 1.800 11.600 1.800 14.600 0" fill="none" stroke="#9a9a9a" stroke-width=".7"/></g>
<g transform="translate(100,472)"><path d="M-8 0c2.500-3.600 5.200-5 8-5s5.500 1.400 8 5c-2.500 3.600-5.200 5-8 5s-5.500-1.400-8-5z" fill="#8e8e8e"/><circle r="3.300" fill="#f0f0f0"/><circle r="1.900" fill="#8e8e8e"/></g>
<g transform="translate(125,472)"><rect x="-7.500" y="-7.500" width="15" height="15.500" rx="3.500" fill="url(#gb)" stroke="#3a3a3a" stroke-width="1.100"/><path d="M-7.300-4.500c3 1.800 11.600 1.800 14.600 0" fill="none" stroke="#9a9a9a" stroke-width=".7"/></g>
<g transform="translate(100,496)"><path d="M-8 0c2.500-3.600 5.200-5 8-5s5.500 1.400 8 5c-2.500 3.600-5.200 5-8 5s-5.500-1.400-8-5z" fill="#8e8e8e"/><circle r="3.300" fill="#f0f0f0"/><circle r="1.900" fill="#8e8e8e"/></g>
<g transform="translate(125,496)"><rect x="-7.500" y="-7.500" width="15" height="15.500" rx="3.500" fill="url(#gb)" stroke="#3a3a3a" stroke-width="1.100"/><path d="M-7.300-4.500c3 1.800 11.600 1.800 14.600 0" fill="none" stroke="#9a9a9a" stroke-width=".7"/></g>
<g transform="translate(100,520)"><path d="M-8 0c2.500-3.600 5.200-5 8-5s5.500 1.400 8 5c-2.500 3.600-5.200 5-8 5s-5.500-1.400-8-5z" fill="#8e8e8e"/><circle r="3.300" fill="#f0f0f0"/><circle r="1.900" fill="#8e8e8e"/></g>
<g transform="translate(125,520)"><rect x="-7.500" y="-7.500" width="15" height="15.500" rx="3.500" fill="url(#gb)" stroke="#3a3a3a" stroke-width="1.100"/><path d="M-7.300-4.500c3 1.800 11.600 1.800 14.600 0" fill="none" stroke="#9a9a9a" stroke-width=".7"/></g>
<g transform="translate(100,544)"><path d="M-8 0c2.500-3.600 5.200-5 8-5s5.500 1.400 8 5c-2.500 3.600-5.200 5-8 5s-5.500-1.400-8-5z" fill="#8e8e8e"/><circle r="3.300" fill="#f0f0f0"/><circle r="1.900" fill="#8e8e8e"/></g>
<g transform="translate(125,544)"><rect x="-7.500" y="-7.500" width="15" height="15.500" rx="3.500" fill="url(#gb)" stroke="#3a3a3a" stroke-width="1.100"/><path d="M-7.300-4.500c3 1.800 11.600 1.800 14.600 0" fill="none" stroke="#9a9a9a" stroke-width=".7"/></g>
<path d="M35.4 562l8.600 6-8.600 6z" fill="#f4f4f4" stroke="#2e2e2e" stroke-width="1.300" stroke-linejoin="round"/>
<g transform="translate(64,568)" fill="none" stroke="#a0a0a0" stroke-width="1"><path d="M-7.500 0c2.500-3.400 5-4.700 7.500-4.700s5 1.300 7.500 4.700c-2.500 3.400-5 4.700-7.500 4.700s-5-1.300-7.500-4.700z"/><path d="M-2.300 1.500a2.700 2.700 0 1 1 4 1.600" stroke-width=".9"/><path d="M-6-5.500l11.500 10.500" stroke="#8a8a8a" stroke-width="1.100"/></g>
<path d="M81 564.5h16v10h-16z" fill="#9b9b9b"/><path d="M81 561.5h5.500l1.200 1.600h-6.700z" fill="#9b9b9b"/><path d="M81 563.7h16v.8h-16z" fill="#bdbdbd"/>
<path d="M44.6 586.5v11h-10.500z" fill="url(#ge)" stroke="#2e2e2e" stroke-width="1.200" stroke-linejoin="round"/>
<g transform="translate(64,592)"><path d="M-8 0c2.500-3.600 5.200-5 8-5s5.500 1.400 8 5c-2.500 3.600-5.200 5-8 5s-5.500-1.400-8-5z" fill="#8e8e8e"/><circle r="3.300" fill="#f0f0f0"/><circle r="1.900" fill="#8e8e8e"/></g>
<path d="M81 588.5h16v10h-16z" fill="#9b9b9b"/><path d="M81 585.5h5.500l1.200 1.600h-6.700z" fill="#9b9b9b"/><path d="M81 587.7h16v.8h-16z" fill="#bdbdbd"/>
<g transform="translate(82,616)" fill="none" stroke="#a0a0a0" stroke-width="1"><path d="M-7.500 0c2.500-3.400 5-4.700 7.500-4.700s5 1.300 7.500 4.700c-2.500 3.400-5 4.700-7.500 4.700s-5-1.300-7.500-4.700z"/><path d="M-2.300 1.500a2.700 2.700 0 1 1 4 1.600" stroke-width=".9"/><path d="M-6-5.500l11.500 10.500" stroke="#8a8a8a" stroke-width="1.100"/></g>
<g transform="translate(107,616)" opacity="1"><path d="M-6.500-6.500h13M-6.500-6.500v13M-6.500 6.500h8M6.500-6.500v7" fill="none" stroke="#4a4a4a" stroke-width=".9" stroke-dasharray="4.200 1.800"/><g fill="#1f8fe0"><rect x="-7.500" y="-7.500" width="2" height="2"/><rect x="5.500" y="-7.500" width="2" height="2"/><rect x="-7.500" y="5.500" width="2" height="2"/></g><path d="M2.200 7.600l.5-2 3.600-3.600 1.600 1.600-3.600 3.600z" fill="#f3c54a"/><path d="M5.800 2.500l1-1 1.600 1.600-1 1z" fill="#e8404a"/><path d="M2.200 7.600l.5-2 1.500 1.500z" fill="#666"/></g>
<g transform="translate(82,640)" fill="none" stroke="#a0a0a0" stroke-width="1"><path d="M-7.500 0c2.500-3.400 5-4.700 7.500-4.700s5 1.300 7.500 4.700c-2.500 3.400-5 4.700-7.500 4.700s-5-1.300-7.500-4.700z"/><path d="M-2.300 1.500a2.700 2.700 0 1 1 4 1.600" stroke-width=".9"/><path d="M-6-5.500l11.500 10.500" stroke="#8a8a8a" stroke-width="1.100"/></g>
<g transform="translate(107,640)" opacity="1"><path d="M-6.500-6.500h13M-6.500-6.500v13M-6.500 6.500h8M6.500-6.500v7" fill="none" stroke="#4a4a4a" stroke-width=".9" stroke-dasharray="4.200 1.800"/><g fill="#1f8fe0"><rect x="-7.500" y="-7.500" width="2" height="2"/><rect x="5.500" y="-7.500" width="2" height="2"/><rect x="-7.500" y="5.500" width="2" height="2"/></g><path d="M2.200 7.600l.5-2 3.600-3.600 1.600 1.600-3.600 3.600z" fill="#f3c54a"/><path d="M5.800 2.500l1-1 1.600 1.600-1 1z" fill="#e8404a"/><path d="M2.200 7.600l.5-2 1.500 1.500z" fill="#666"/></g>
<g transform="translate(82,664)" fill="none" stroke="#a0a0a0" stroke-width="1"><path d="M-7.500 0c2.500-3.400 5-4.700 7.500-4.700s5 1.300 7.500 4.700c-2.500 3.400-5 4.700-7.500 4.700s-5-1.300-7.500-4.700z"/><path d="M-2.300 1.500a2.700 2.700 0 1 1 4 1.600" stroke-width=".9"/><path d="M-6-5.500l11.500 10.500" stroke="#8a8a8a" stroke-width="1.100"/></g>
<g transform="translate(107,664)" opacity="1"><path d="M-6.500-6.500h13M-6.500-6.500v13M-6.500 6.500h8M6.500-6.500v7" fill="none" stroke="#4a4a4a" stroke-width=".9" stroke-dasharray="4.200 1.800"/><g fill="#1f8fe0"><rect x="-7.500" y="-7.500" width="2" height="2"/><rect x="5.500" y="-7.500" width="2" height="2"/><rect x="-7.500" y="5.500" width="2" height="2"/></g><path d="M2.200 7.600l.5-2 3.600-3.600 1.600 1.600-3.600 3.600z" fill="#f3c54a"/><path d="M5.800 2.500l1-1 1.600 1.600-1 1z" fill="#e8404a"/><path d="M2.200 7.600l.5-2 1.500 1.500z" fill="#666"/></g>
<g transform="translate(82,688)" fill="none" stroke="#a0a0a0" stroke-width="1"><path d="M-7.500 0c2.500-3.400 5-4.700 7.500-4.700s5 1.300 7.500 4.700c-2.500 3.400-5 4.700-7.500 4.700s-5-1.300-7.500-4.700z"/><path d="M-2.300 1.500a2.700 2.700 0 1 1 4 1.600" stroke-width=".9"/><path d="M-6-5.500l11.500 10.500" stroke="#8a8a8a" stroke-width="1.100"/></g>
<g transform="translate(107,688)" opacity="1"><path d="M-6.500-6.500h13M-6.500-6.500v13M-6.500 6.500h8M6.500-6.500v7" fill="none" stroke="#4a4a4a" stroke-width=".9" stroke-dasharray="4.200 1.800"/><g fill="#1f8fe0"><rect x="-7.500" y="-7.500" width="2" height="2"/><rect x="5.500" y="-7.500" width="2" height="2"/><rect x="-7.500" y="5.500" width="2" height="2"/></g><path d="M2.200 7.600l.5-2 3.600-3.600 1.600 1.600-3.600 3.600z" fill="#f3c54a"/><path d="M5.800 2.500l1-1 1.600 1.600-1 1z" fill="#e8404a"/><path d="M2.200 7.600l.5-2 1.500 1.500z" fill="#666"/></g>
<g transform="translate(82,712)" fill="none" stroke="#a0a0a0" stroke-width="1"><path d="M-7.500 0c2.500-3.400 5-4.700 7.500-4.700s5 1.300 7.500 4.700c-2.500 3.400-5 4.700-7.500 4.700s-5-1.300-7.500-4.700z"/><path d="M-2.300 1.500a2.700 2.700 0 1 1 4 1.600" stroke-width=".9"/><path d="M-6-5.500l11.500 10.500" stroke="#8a8a8a" stroke-width="1.100"/></g>
<g transform="translate(107,712)" opacity="1"><path d="M-6.500-6.500h13M-6.500-6.500v13M-6.500 6.500h8M6.500-6.500v7" fill="none" stroke="#4a4a4a" stroke-width=".9" stroke-dasharray="4.200 1.800"/><g fill="#1f8fe0"><rect x="-7.500" y="-7.500" width="2" height="2"/><rect x="5.500" y="-7.500" width="2" height="2"/><rect x="-7.500" y="5.500" width="2" height="2"/></g><path d="M2.200 7.600l.5-2 3.600-3.600 1.600 1.600-3.600 3.600z" fill="#f3c54a"/><path d="M5.800 2.500l1-1 1.600 1.600-1 1z" fill="#e8404a"/><path d="M2.200 7.600l.5-2 1.500 1.500z" fill="#666"/></g>
<g transform="translate(82,736)" fill="none" stroke="#a0a0a0" stroke-width="1"><path d="M-7.500 0c2.500-3.400 5-4.700 7.500-4.700s5 1.300 7.500 4.700c-2.500 3.400-5 4.700-7.500 4.700s-5-1.300-7.500-4.700z"/><path d="M-2.300 1.500a2.700 2.700 0 1 1 4 1.600" stroke-width=".9"/><path d="M-6-5.500l11.500 10.500" stroke="#8a8a8a" stroke-width="1.100"/></g>
<g transform="translate(107,736)" opacity="1"><path d="M-6.500-6.500h13M-6.500-6.500v13M-6.500 6.500h8M6.500-6.500v7" fill="none" stroke="#4a4a4a" stroke-width=".9" stroke-dasharray="4.200 1.800"/><g fill="#555"><rect x="-7.500" y="-7.500" width="2" height="2"/><rect x="5.500" y="-7.500" width="2" height="2"/><rect x="-7.500" y="5.500" width="2" height="2"/></g><path d="M3.400 4.200v-1.300a1.600 1.600 0 0 1 3.200 0v1.300" fill="none" stroke="#c63b46" stroke-width="1.100"/><rect x="2.100" y="4" width="5.900" height="4.400" fill="#ea6a74" stroke="#c63b46" stroke-width=".8"/></g>
<g transform="translate(82,760)" fill="none" stroke="#a0a0a0" stroke-width="1"><path d="M-7.500 0c2.500-3.400 5-4.700 7.500-4.700s5 1.300 7.500 4.700c-2.500 3.400-5 4.700-7.500 4.700s-5-1.300-7.500-4.700z"/><path d="M-2.300 1.500a2.700 2.700 0 1 1 4 1.600" stroke-width=".9"/><path d="M-6-5.500l11.500 10.500" stroke="#8a8a8a" stroke-width="1.100"/></g>
<g transform="translate(107,760)" opacity="1"><path d="M-6.500-6.500h13M-6.500-6.500v13M-6.500 6.500h8M6.500-6.500v7" fill="none" stroke="#4a4a4a" stroke-width=".9" stroke-dasharray="4.200 1.800"/><g fill="#555"><rect x="-7.500" y="-7.500" width="2" height="2"/><rect x="5.500" y="-7.500" width="2" height="2"/><rect x="-7.500" y="5.500" width="2" height="2"/></g><path d="M3.400 4.200v-1.300a1.600 1.600 0 0 1 3.200 0v1.300" fill="none" stroke="#c63b46" stroke-width="1.100"/><rect x="2.100" y="4" width="5.900" height="4.400" fill="#ea6a74" stroke="#c63b46" stroke-width=".8"/></g>
<g transform="translate(82,784)" fill="none" stroke="#a0a0a0" stroke-width="1"><path d="M-7.500 0c2.500-3.400 5-4.700 7.500-4.700s5 1.300 7.500 4.700c-2.500 3.400-5 4.700-7.500 4.700s-5-1.300-7.500-4.700z"/><path d="M-2.300 1.500a2.700 2.700 0 1 1 4 1.600" stroke-width=".9"/><path d="M-6-5.500l11.500 10.500" stroke="#8a8a8a" stroke-width="1.100"/></g>
<g transform="translate(107,784)" opacity="1"><path d="M-6.500-6.500h13M-6.500-6.500v13M-6.500 6.500h8M6.500-6.500v7" fill="none" stroke="#4a4a4a" stroke-width=".9" stroke-dasharray="4.200 1.800"/><g fill="#555"><rect x="-7.500" y="-7.500" width="2" height="2"/><rect x="5.500" y="-7.500" width="2" height="2"/><rect x="-7.500" y="5.500" width="2" height="2"/></g><path d="M3.400 4.200v-1.300a1.600 1.600 0 0 1 3.200 0v1.300" fill="none" stroke="#c63b46" stroke-width="1.100"/><rect x="2.100" y="4" width="5.900" height="4.400" fill="#ea6a74" stroke="#c63b46" stroke-width=".8"/></g>
<g transform="translate(82,808)" fill="none" stroke="#a0a0a0" stroke-width="1"><path d="M-7.500 0c2.500-3.400 5-4.700 7.500-4.700s5 1.300 7.500 4.700c-2.500 3.400-5 4.700-7.500 4.700s-5-1.300-7.500-4.700z"/><path d="M-2.300 1.500a2.700 2.700 0 1 1 4 1.600" stroke-width=".9"/><path d="M-6-5.500l11.500 10.500" stroke="#8a8a8a" stroke-width="1.100"/></g>
<g transform="translate(107,808)" opacity="1"><path d="M-6.500-6.500h13M-6.500-6.500v13M-6.500 6.500h8M6.500-6.500v7" fill="none" stroke="#4a4a4a" stroke-width=".9" stroke-dasharray="4.200 1.800"/><g fill="#555"><rect x="-7.500" y="-7.500" width="2" height="2"/><rect x="5.500" y="-7.500" width="2" height="2"/><rect x="-7.500" y="5.500" width="2" height="2"/></g><path d="M3.400 4.200v-1.300a1.600 1.600 0 0 1 3.200 0v1.300" fill="none" stroke="#c63b46" stroke-width="1.100"/><rect x="2.100" y="4" width="5.900" height="4.400" fill="#ea6a74" stroke="#c63b46" stroke-width=".8"/></g>
<g transform="translate(82,832)" fill="none" stroke="#a0a0a0" stroke-width="1"><path d="M-7.500 0c2.500-3.400 5-4.700 7.500-4.700s5 1.300 7.500 4.700c-2.500 3.400-5 4.700-7.500 4.700s-5-1.300-7.500-4.700z"/><path d="M-2.300 1.500a2.700 2.700 0 1 1 4 1.600" stroke-width=".9"/><path d="M-6-5.500l11.500 10.500" stroke="#8a8a8a" stroke-width="1.100"/></g>
<g transform="translate(107,832)" opacity="1"><path d="M-6.500-6.500h13M-6.500-6.500v13M-6.500 6.500h8M6.500-6.500v7" fill="none" stroke="#4a4a4a" stroke-width=".9" stroke-dasharray="4.200 1.800"/><g fill="#555"><rect x="-7.500" y="-7.500" width="2" height="2"/><rect x="5.500" y="-7.500" width="2" height="2"/><rect x="-7.500" y="5.500" width="2" height="2"/></g><path d="M3.400 4.200v-1.300a1.600 1.600 0 0 1 3.200 0v1.300" fill="none" stroke="#c63b46" stroke-width="1.100"/><rect x="2.100" y="4" width="5.900" height="4.400" fill="#ea6a74" stroke="#c63b46" stroke-width=".8"/></g>
<g transform="translate(82,856)" fill="none" stroke="#a0a0a0" stroke-width="1"><path d="M-7.500 0c2.500-3.400 5-4.700 7.500-4.700s5 1.300 7.500 4.700c-2.500 3.400-5 4.700-7.500 4.700s-5-1.300-7.500-4.700z"/><path d="M-2.300 1.500a2.700 2.700 0 1 1 4 1.600" stroke-width=".9"/><path d="M-6-5.500l11.500 10.500" stroke="#8a8a8a" stroke-width="1.100"/></g>
<g transform="translate(107,856)" opacity="1"><path d="M-6.500-6.500h13M-6.500-6.500v13M-6.500 6.500h8M6.500-6.500v7" fill="none" stroke="#4a4a4a" stroke-width=".9" stroke-dasharray="4.200 1.800"/><g fill="#1f8fe0"><rect x="-7.500" y="-7.500" width="2" height="2"/><rect x="5.500" y="-7.500" width="2" height="2"/><rect x="-7.500" y="5.500" width="2" height="2"/></g><path d="M2.200 7.600l.5-2 3.600-3.600 1.600 1.600-3.600 3.600z" fill="#f3c54a"/><path d="M5.800 2.500l1-1 1.600 1.600-1 1z" fill="#e8404a"/><path d="M2.200 7.600l.5-2 1.500 1.500z" fill="#666"/></g>
<g transform="translate(82,880)"><path d="M-8 0c2.500-3.600 5.200-5 8-5s5.500 1.400 8 5c-2.500 3.600-5.200 5-8 5s-5.500-1.400-8-5z" fill="#8e8e8e"/><circle r="3.300" fill="#f0f0f0"/><circle r="1.900" fill="#8e8e8e"/></g>
<g transform="translate(107,880)" opacity="0.5"><path d="M-6.500-6.500h13M-6.500-6.500v13M-6.500 6.500h8M6.500-6.500v7" fill="none" stroke="#4a4a4a" stroke-width=".9" stroke-dasharray="4.200 1.800"/><g fill="#555"><rect x="-7.500" y="-7.500" width="2" height="2"/><rect x="5.500" y="-7.500" width="2" height="2"/><rect x="-7.500" y="5.500" width="2" height="2"/></g><path d="M3.400 4.200v-1.300a1.600 1.600 0 0 1 3.200 0v1.300" fill="none" stroke="#c63b46" stroke-width="1.100"/><rect x="2.100" y="4" width="5.900" height="4.400" fill="#ea6a74" stroke="#c63b46" stroke-width=".8"/></g>
<path d="M35.4 898l8.600 6-8.600 6z" fill="#f4f4f4" stroke="#2e2e2e" stroke-width="1.300" stroke-linejoin="round"/>
<g transform="translate(64,904)"><path d="M-8 0c2.500-3.600 5.200-5 8-5s5.500 1.400 8 5c-2.500 3.600-5.200 5-8 5s-5.500-1.400-8-5z" fill="#8e8e8e"/><circle r="3.300" fill="#f0f0f0"/><circle r="1.900" fill="#8e8e8e"/></g>
<path d="M81 900.5h16v10h-16z" fill="#9b9b9b"/><path d="M81 897.5h5.500l1.200 1.600h-6.700z" fill="#9b9b9b"/><path d="M81 899.7h16v.8h-16z" fill="#bdbdbd"/>
<path d="M424 598.500h88" stroke="#4f5f92" stroke-width="2.800" stroke-dasharray="2.200 2.600" fill="none" opacity=".9" transform="skewX(-30)"/>
<path d="M610 887.500h92" stroke="#5a6aa0" stroke-width="2.600" stroke-dasharray="2.200 2.600" fill="none" opacity=".55" transform="skewX(-30)"/></svg>
<svg class="b" style="left:500px;top:220px;" width="1180" height="620" viewBox="500 220 1180 620"><defs>
<linearGradient id="gPur" gradientUnits="userSpaceOnUse" x1="640" y1="260" x2="1180" y2="800"><stop offset="0" stop-color="#c592aa"/><stop offset=".25" stop-color="#b07c9c"/><stop offset=".6" stop-color="#9d6288"/><stop offset="1" stop-color="#90507a"/></linearGradient>
<linearGradient id="gPink" gradientUnits="userSpaceOnUse" x1="622" y1="267" x2="1155" y2="815"><stop offset="0" stop-color="#e06c72"/><stop offset=".5" stop-color="#ea7c7e"/><stop offset="1" stop-color="#f59496"/></linearGradient>
<linearGradient id="gRed1" gradientUnits="userSpaceOnUse" x1="622" y1="267" x2="1155" y2="800"><stop offset="0" stop-color="#d03a52"/><stop offset="1" stop-color="#cc2444"/></linearGradient>
<linearGradient id="gRed2" gradientUnits="userSpaceOnUse" x1="622" y1="267" x2="1155" y2="800"><stop offset="0" stop-color="#c83250"/><stop offset="1" stop-color="#c21f40"/></linearGradient>
<linearGradient id="gNavT" gradientUnits="userSpaceOnUse" x1="660" y1="260" x2="950" y2="282"><stop offset="0" stop-color="#9c9dbc"/><stop offset=".5" stop-color="#7f82a9"/><stop offset="1" stop-color="#686c9a"/></linearGradient>
<linearGradient id="gNavF" gradientUnits="userSpaceOnUse" x1="700" y1="290" x2="936" y2="292"><stop offset="0" stop-color="#353a72"/><stop offset="1" stop-color="#3f4480"/></linearGradient>
<linearGradient id="gYel" x1="0" y1="0" x2="1" y2="0"><stop offset="0" stop-color="#bf8f3a"/><stop offset=".12" stop-color="#cd9a3c"/><stop offset="1" stop-color="#d5a142"/></linearGradient>
<linearGradient id="gGus" x1="0" y1="0" x2="1" y2="1"><stop offset="0" stop-color="#43804a"/><stop offset="1" stop-color="#2f6136"/></linearGradient>
<linearGradient id="gHole" x1="0" y1="0" x2="1" y2="0"><stop offset="0" stop-color="#1b1d3e"/><stop offset=".5" stop-color="#2a2d55"/><stop offset="1" stop-color="#1f2148"/></linearGradient>
<linearGradient id="gGreen" gradientUnits="userSpaceOnUse" x1="950" y1="280" x2="1630" y2="700"><stop offset="0" stop-color="#8eb481"/><stop offset=".3" stop-color="#7ea872"/><stop offset=".6" stop-color="#729e68"/><stop offset="1" stop-color="#6c9a62"/></linearGradient>
</defs>
<polygon points="942.0,277.6 958.0,278.8 966.0,279.6 972.0,282.2 1000.0,298.1 1200.0,420.2 1400.0,542.3 1600.0,664.4 1628.0,681.5 1634.0,684.5 1638.5,688.5 1639.7,692.0 1630.7,696.4 1615.2,699.6 1576.0,675.1 1549.8,676.0 1557.2,662.9 1458.4,602.5 1418.4,594.3 1407.8,585.4 1416.8,574.7 1335.2,524.9 1300.0,518.1 1291.1,511.0 1301.7,502.9 1233.1,460.4 1201.2,455.5 1116.8,398.6 1125.7,392.9 1077.6,363.5 1050.6,359.4 1046.6,354.0 1055.6,350.8 1014.0,323.8 989.4,320.0 986.2,315.3 995.2,312.4 959.2,289.5 935.6,285.8 940.0,281.0" fill="url(#gGreen)" stroke="#0e0e0e" stroke-width="1.1" stroke-linejoin="round" />
<polygon points="1615.2,699.6 1630.7,696.4 1628.2,718.4 1612.7,720.9" fill="#5d9a52" stroke="#0e0e0e" stroke-width="1.1" stroke-linejoin="round" />
<path d="M1630.7 696.4L1639.700 692L1638 704C1637.500 712 1636 716 1628.200 718.400Z" fill="#6aa45c" stroke="#0e0e0e" stroke-width="1.1" stroke-linejoin="round" />
<polygon points="935.6,285.8 959.2,289.5 958.4,301.8 935.2,297.7" fill="#3d8144" stroke="#0e0e0e" stroke-width="1.1" stroke-linejoin="round" />
<polygon points="959.2,289.5 995.2,312.4 986.2,315.3 958.4,301.8" fill="url(#gGus)" stroke="#0e0e0e" stroke-width="1.1" stroke-linejoin="round" />
<polygon points="989.4,320.0 1014.0,323.8 1013.1,336.9 988.6,332.0" fill="#3d8144" stroke="#0e0e0e" stroke-width="1.1" stroke-linejoin="round" />
<polygon points="1014.0,323.8 1055.6,350.8 1046.6,354.0 1013.1,336.9" fill="url(#gGus)" stroke="#0e0e0e" stroke-width="1.1" stroke-linejoin="round" />
<polygon points="1050.6,359.4 1077.6,363.5 1076.3,378.2 1049.0,372.8" fill="#3d8144" stroke="#0e0e0e" stroke-width="1.1" stroke-linejoin="round" />
<polygon points="1077.6,363.5 1125.7,392.9 1116.8,398.6 1076.3,378.2" fill="url(#gGus)" stroke="#0e0e0e" stroke-width="1.1" stroke-linejoin="round" />
<polygon points="1201.2,455.5 1233.1,460.4 1231.9,477.6 1199.9,470.7" fill="#3d8144" stroke="#0e0e0e" stroke-width="1.1" stroke-linejoin="round" />
<polygon points="1233.1,460.4 1301.7,502.9 1291.1,511.0 1231.9,477.6" fill="url(#gGus)" stroke="#0e0e0e" stroke-width="1.1" stroke-linejoin="round" />
<polygon points="1300.0,518.1 1335.2,524.9 1333.5,543.2 1298.4,535.5" fill="#3d8144" stroke="#0e0e0e" stroke-width="1.1" stroke-linejoin="round" />
<polygon points="1335.2,524.9 1416.8,574.7 1407.8,585.4 1333.5,543.2" fill="url(#gGus)" stroke="#0e0e0e" stroke-width="1.1" stroke-linejoin="round" />
<polygon points="1418.4,594.3 1458.4,602.5 1455.9,621.2 1415.9,612.3" fill="#3d8144" stroke="#0e0e0e" stroke-width="1.1" stroke-linejoin="round" />
<polygon points="1458.4,602.5 1557.2,662.9 1549.8,676.0 1455.9,621.2" fill="url(#gGus)" stroke="#0e0e0e" stroke-width="1.1" stroke-linejoin="round" />
<polygon points="658.0,259.6 942.0,277.6 952.7,285.1 935.6,285.8 679.2,281.3" fill="url(#gNavT)" stroke="#0e0e0e" stroke-width="1.1" stroke-linejoin="round" />
<polygon points="698.8,282.2 935.6,285.8 935.2,297.7 698.8,293.6" fill="url(#gNavF)" stroke="#0e0e0e" stroke-width="1.1" stroke-linejoin="round" />
<ellipse cx="723.3" cy="272.8" rx="36" ry="7.6" transform="rotate(2.2 723.3 272.8)" fill="url(#gHole)" stroke="#0e0e0e" stroke-width="1.2"/>
<ellipse cx="804.5" cy="276.2" rx="25.7" ry="5.9" transform="rotate(2.2 804.5 276.2)" fill="url(#gHole)" stroke="#0e0e0e" stroke-width="1.2"/>
<ellipse cx="869.6" cy="278.6" rx="18.5" ry="4.4" transform="rotate(2.2 869.6 278.6)" fill="url(#gHole)" stroke="#0e0e0e" stroke-width="1.2"/>
<ellipse cx="918" cy="280.6" rx="12.7" ry="3.1" transform="rotate(2.2 918 280.6)" fill="url(#gHole)" stroke="#0e0e0e" stroke-width="1.2"/>
<polygon points="714.3,314.0 737.2,313.2 1004.2,317.0 1007.4,318.9 989.4,320.0 736.4,317.5 720.9,317.5" fill="#e2b15a" stroke="#0e0e0e" stroke-width="1.1" stroke-linejoin="round" />
<polygon points="736.4,317.5 989.4,320.0 988.6,332.0 736.0,330.3" fill="url(#gYel)" stroke="#0e0e0e" stroke-width="1.1" stroke-linejoin="round" />
<polygon points="726.6,322.2 736.4,317.5 736.0,330.3" fill="#7c5282" stroke="#0e0e0e" stroke-width="1.1" stroke-linejoin="round" />
<polygon points="757.6,353.2 770.0,351.8 1064.6,354.8 1067.8,357.3 1050.6,359.4 782.1,358.1 764.5,358.0" fill="#e2b15a" stroke="#0e0e0e" stroke-width="1.1" stroke-linejoin="round" />
<polygon points="782.1,358.1 1050.6,359.4 1049.0,372.8 781.6,372.0" fill="url(#gYel)" stroke="#0e0e0e" stroke-width="1.1" stroke-linejoin="round" />
<polygon points="767.4,362.2 782.1,358.1 781.6,372.0" fill="#7c5282" stroke="#0e0e0e" stroke-width="1.1" stroke-linejoin="round" />
<polygon points="935.5,519.9 959.5,518.8 1310.7,510.6 1322.1,516.0 1300.0,518.1 966.7,526.5 941.5,526.4" fill="#e2b15a" stroke="#0e0e0e" stroke-width="1.1" stroke-linejoin="round" />
<polygon points="966.7,526.5 1300.0,518.1 1298.4,535.5 964.0,545.4" fill="url(#gYel)" stroke="#0e0e0e" stroke-width="1.1" stroke-linejoin="round" />
<polygon points="951.3,534.6 966.7,526.5 964.0,545.4" fill="#7c5282" stroke="#0e0e0e" stroke-width="1.1" stroke-linejoin="round" />
<polygon points="1021.2,600.7 1045.5,599.0 1432.0,585.2 1442.9,591.5 1418.4,594.3 1056.8,607.9 1028.6,607.8" fill="#e2b15a" stroke="#0e0e0e" stroke-width="1.1" stroke-linejoin="round" />
<polygon points="1056.8,607.9 1418.4,594.3 1415.9,612.3 1055.5,628.6" fill="url(#gYel)" stroke="#0e0e0e" stroke-width="1.1" stroke-linejoin="round" />
<polygon points="1041.1,618.8 1056.8,607.9 1055.5,628.6" fill="#7c5282" stroke="#0e0e0e" stroke-width="1.1" stroke-linejoin="round" />
<polygon points="816.8,409.4 838.0,407.6 1135.5,399.4 1222.1,454.1 1200.9,454.9 1040.0,451.2 882.9,449.4 859.2,447.8" fill="#c47468" stroke="#0e0e0e" stroke-width="1.1" stroke-linejoin="round" />
<polygon points="882.9,449.4 1040.0,451.2 1200.9,454.9 1200.0,471.3 1040.0,469.2 882.2,465.7" fill="#9d3b37" stroke="#0e0e0e" stroke-width="1.1" stroke-linejoin="round" />
<polygon points="867.4,455.9 882.9,449.4 882.2,465.7" fill="#7c5282" stroke="#0e0e0e" stroke-width="1.1" stroke-linejoin="round" />
<polygon points="1127.8,700.5 1155.6,698.0 1576.0,675.1 1615.2,699.6 1211.7,781.7" fill="#55567f" stroke="#0e0e0e" stroke-width="1.1" stroke-linejoin="round" />
<polygon points="1211.7,781.7 1615.2,699.6 1612.7,720.9 1210.9,806.5" fill="#424573" stroke="#0e0e0e" stroke-width="1.1" stroke-linejoin="round" />
<g transform="rotate(9.5 1257.5 729.2)"><clipPath id="hc1257"><ellipse cx="1257.5" cy="729.2" rx="69.5" ry="26.5"/></clipPath><ellipse cx="1257.5" cy="729.2" rx="69.5" ry="26.5" fill="url(#gHole)"/><g clip-path="url(#hc1257)"><ellipse cx="1260.0" cy="754.7" rx="69.5" ry="26.5" fill="#fff" stroke="#0e0e0e" stroke-width=".9"/></g><ellipse cx="1257.5" cy="729.2" rx="69.5" ry="26.5" fill="none" stroke="#0e0e0e" stroke-width="1"/></g>
<g transform="rotate(9.2 1385 712.8)"><clipPath id="hc1385"><ellipse cx="1385" cy="712.8" rx="49.5" ry="18.3"/></clipPath><ellipse cx="1385" cy="712.8" rx="49.5" ry="18.3" fill="url(#gHole)"/><g clip-path="url(#hc1385)"><ellipse cx="1387.5" cy="737.8" rx="49.5" ry="18.3" fill="#fff" stroke="#0e0e0e" stroke-width=".9"/></g><ellipse cx="1385" cy="712.8" rx="49.5" ry="18.3" fill="none" stroke="#0e0e0e" stroke-width="1"/></g>
<g transform="rotate(8.7 1482.5 700.9)"><clipPath id="hc1482"><ellipse cx="1482.5" cy="700.9" rx="35.2" ry="12.7"/></clipPath><ellipse cx="1482.5" cy="700.9" rx="35.2" ry="12.7" fill="url(#gHole)"/><g clip-path="url(#hc1482)"><ellipse cx="1485.5" cy="730.9" rx="35.2" ry="12.7" fill="#fff" stroke="#0e0e0e" stroke-width=".9"/></g><ellipse cx="1482.5" cy="700.9" rx="35.2" ry="12.7" fill="none" stroke="#0e0e0e" stroke-width="1"/></g>
<g transform="rotate(8 1553.1 692.3)"><clipPath id="hc1553"><ellipse cx="1553.1" cy="692.3" rx="24" ry="8.4"/></clipPath><ellipse cx="1553.1" cy="692.3" rx="24" ry="8.4" fill="url(#gHole)"/><g clip-path="url(#hc1553)"><ellipse cx="1556.1" cy="722.3" rx="24" ry="8.4" fill="#fff" stroke="#0e0e0e" stroke-width=".9"/></g><ellipse cx="1553.1" cy="692.3" rx="24" ry="8.4" fill="none" stroke="#0e0e0e" stroke-width="1"/></g>
<polygon points="631.0,258.3 658.0,259.6 679.2,281.3 685.0,284.6 698.8,293.6 709.4,306.7 716.5,310.5 737.2,313.2 714.3,314.0 720.9,317.5 736.4,317.5 726.6,322.2 736.0,330.3 751.9,348.3 758.5,350.5 770.0,351.8 757.6,353.2 764.5,358.0 782.1,358.1 767.4,362.2 781.6,372.0 808.6,401.2 817.0,404.5 838.0,407.6 816.8,409.4 859.2,447.8 882.9,449.4 867.4,455.9 882.2,465.7 924.5,510.7 933.0,514.0 959.5,518.8 935.5,519.9 941.5,526.4 966.7,526.5 951.3,534.6 964.0,545.4 1008.8,590.2 1018.0,594.0 1045.5,599.0 1021.2,600.7 1028.6,607.8 1056.8,607.9 1041.1,618.8 1055.5,628.6 1113.4,687.4 1122.0,691.5 1155.6,698.0 1127.8,700.5 1211.7,781.7 1167.5,791.5" fill="url(#gPur)" stroke="#0e0e0e" stroke-width="1.1" stroke-linejoin="round" />
<polygon points="679.5,281.6 698.8,282.2 698.8,293.6 685.0,284.6" fill="#7c5282" stroke="#0e0e0e" stroke-width="1.1" stroke-linejoin="round" />
<polygon points="631.0,258.3 1167.5,791.5 1157.0,794.2 626.2,261.7" fill="url(#gRed2)" stroke="#0e0e0e" stroke-width="1.1" stroke-linejoin="round" />
<polygon points="626.2,261.7 1157.0,794.2 1152.8,802.9 623.4,264.5" fill="url(#gRed1)" stroke="#0e0e0e" stroke-width="1.1" stroke-linejoin="round" />
<polygon points="623.4,264.5 1152.8,802.9 1153.6,819.7 621.9,269.6" fill="url(#gPink)" stroke="#0e0e0e" stroke-width="1.1" stroke-linejoin="round" />
<polygon points="1167.5,791.5 1211.7,781.7 1210.9,806.5 1164.3,816.8" fill="#8e4a7a" stroke="#0e0e0e" stroke-width="1.1" stroke-linejoin="round" />
<polygon points="1157.0,794.2 1167.5,791.5 1164.3,816.8 1153.6,819.7 1152.8,802.9" fill="#e8707a" stroke="#0e0e0e" stroke-width="1.1" stroke-linejoin="round" />
<path d="M1157 794.2L1164.300 816.800M1154.200 802.900L1157 794.200" fill="none" stroke="#0e0e0e" stroke-width="1.1" stroke-linejoin="round" />
<path d="M536 243.500c22-2.500 48-3.800 68-3.500s60 2 86 6.500" fill="none" stroke="#555" stroke-width=".9" stroke-dasharray="5 4 1.500 4" opacity=".75"/>
<ellipse cx="605" cy="241" rx="8.500" ry="2.600" fill="#fff" stroke="#333" stroke-width="1" stroke-dasharray="2.500 1.500"/><ellipse cx="605" cy="241" rx="3.500" ry="1.200" fill="none" stroke="#333" stroke-width=".8"/>
<path d="M615 264.500c1-6.500 6.500-12.500 13.800-14.600" fill="none" stroke="#333" stroke-width="2.600" stroke-linecap="round"/><path d="M613.600 266l.3-5.200 4 3zM630.600 249l-5 .6 3 3.800z" fill="#fff" stroke="#333" stroke-width=".9" stroke-linejoin="round"/><path d="M615 264.500c1-6.500 6.500-12.500 13.800-14.600" fill="none" stroke="#fff" stroke-width="1.100" stroke-linecap="round"/><path d="M620.500 254.500l5.500 4.500" stroke="#333" stroke-width="2.400"/><path d="M620.500 254.500l5.500 4.500" stroke="#fff" stroke-width=".9"/>
<text x="676" y="328" font-size="14.500" fill="#3a3a3a" opacity=".7" font-family="Liberation Sans, sans-serif" textLength="51" lengthAdjust="spacingAndGlyphs">263.671</text>
<g><path d="M792.300 427.600L800.200 426.200L803.800 429.200L797 437.600L802.800 445.600L800.200 449.800L792.200 449.600L789.600 444L791.800 437.600L790 432Z" fill="#3f72c8" stroke="#c4c6d6" stroke-width="1.800" stroke-linejoin="round" opacity=".95"/><path d="M800.800 430.400l-7.600 7.400 6.600 8.200" fill="none" stroke="#f01c26" stroke-width="1.900"/><ellipse cx="803.300" cy="427.800" rx="2.400" ry="2" fill="#3a3a44"/><path d="M806.500 428.300h26" stroke="#d2a8f0" stroke-width="1.300" opacity=".9"/><path d="M806.500 445.500h25" stroke="#c9a0e8" stroke-width="1.100" opacity=".35"/><path d="M836.600 433v8.500" stroke="#c9a0e8" stroke-width="1.200" stroke-dasharray="1.500 1.500" opacity=".55"/><circle cx="837" cy="428.300" r="3.700" fill="#b9a8dc" stroke="#6a58a8" stroke-width=".9"/><circle cx="837" cy="428.300" r="1.500" fill="#1c1c6c"/><circle cx="836" cy="445.500" r="3.600" fill="#a888ba" stroke="#7a5a98" stroke-width=".8" opacity=".7"/><circle cx="836" cy="445.500" r="1.300" fill="#6a4a88" opacity=".7"/></g>
<g transform="translate(1170,806) rotate(38)"><path d="M-7-2.500h8v-4l7.500 6.500-7.500 6.500v-4h-8z" fill="#f4f4f4" stroke="#8a8a8a" stroke-width=".8"/><path d="M-5-2.500v5M-2.500-2.500v5" stroke="#8a8a8a" stroke-width=".8"/></g></svg>
<svg class="b" style="left:1800px;top:160px;" width="114" height="95" viewBox="1800 160 114 95"><defs><radialGradient id="vsh"><stop offset="0" stop-color="#000" stop-opacity=".22"/><stop offset="1" stop-color="#000" stop-opacity="0"/></radialGradient></defs><ellipse cx="1852" cy="238" rx="38" ry="9" fill="url(#vsh)"/><path d="M1823.900 175.400L1865.600 175.200L1885.700 186L1837.100 187.500Z" fill="#f3f3f3" stroke="#999" stroke-width=".8" stroke-dasharray="3 2"/><path d="M1823.900 175.400L1837.100 187.500L1833.900 235.600L1822.300 215.500Z" fill="#ebebeb" stroke="#999" stroke-width=".8" stroke-dasharray="3 2"/><path d="M1837.100 187.500L1885.700 186L1881.500 233.500L1833.900 235.600Z" fill="#e4e4e4" stroke="#c0c0c0" stroke-width=".6"/><path d="M1882 233L1888.900 178.500" stroke="#7c7ce0" stroke-width="1.800"/><path d="M1882 233.200L1825.500 239.300" stroke="#62dc62" stroke-width="2"/><text x="1886" y="175.500" font-size="12" font-style="italic" fill="#8a8aea" font-family="Liberation Sans, sans-serif">Z</text><text x="1813.500" y="243.500" font-size="11" fill="#9aeb9a" font-family="Liberation Sans, sans-serif">Y</text><text transform="translate(1848.500,216) skewY(-2) skewX(-12)" font-size="11" font-weight="bold" fill="#8c8c8c" font-family="Liberation Sans, sans-serif" textLength="23" lengthAdjust="spacingAndGlyphs">LEFT</text><text transform="translate(1846,180.500) skewX(50) scale(1,.45)" font-size="9" font-weight="bold" fill="#aaa" font-family="Liberation Sans, sans-serif">TOP</text></svg>
<div class="b" style="left:1661px;top:264.5px;width:250.5px;height:312.5px;background:#f0f0f0;border:1px solid #c9c9c9;box-sizing:border-box;"></div>
<div class="b" style="left:1662px;top:288px;width:248.5px;height:1px;background:#d0d0d0;"></div>
<span class="t" style="left:1686.4px;top:268.8px;font-size:11px;line-height:15px;color:#444;transform:scaleX(0.8561);">EXTRUDE</span>
<span class="t" style="left:1674.3px;top:296.6px;font-size:11.5px;line-height:15.5px;color:#333;transform:scaleX(0.8784);">Type</span>
<span class="t" style="left:1674.3px;top:326.9px;font-size:11.5px;line-height:15.5px;color:#333;transform:scaleX(0.9205);">Profiles</span>
<span class="t" style="left:1674.3px;top:356.9px;font-size:11.5px;line-height:15.5px;color:#333;transform:scaleX(0.9141);">Start</span>
<span class="t" style="left:1674.3px;top:386.9px;font-size:11.5px;line-height:15.5px;color:#333;transform:scaleX(0.9013);">Direction</span>
<span class="t" style="left:1674.3px;top:416.8px;font-size:11.5px;line-height:15.5px;color:#333;transform:scaleX(0.9187);">Extent Type</span>
<span class="t" style="left:1674.3px;top:446.8px;font-size:11.5px;line-height:15.5px;color:#333;transform:scaleX(0.9302);">Taper Angle</span>
<span class="t" style="left:1674.3px;top:486.9px;font-size:11.5px;line-height:15.5px;color:#333;transform:scaleX(0.9049);">Operation</span>
<div class="b" style="left:1746.6px;top:290.4px;width:22.8px;height:26.7px;background:#1b8ccb;border-radius:1.500px;"></div>
<div class="b" style="left:1746.6px;top:320.8px;width:77.8px;height:26.5px;background:#1b8ccb;border-radius:1.500px;"></div>
<span class="t" style="left:1768px;top:326.8px;font-size:11.5px;line-height:15.5px;color:#fff;transform:scaleX(0.9537);">2 selected</span>
<div class="b" style="left:1747px;top:351.3px;width:131px;height:25.69999999999999px;background:#fff;border:1px solid #cfcfcf;border-radius:2px;box-sizing:border-box;"></div>
<span class="t" style="left:1770px;top:356.7px;font-size:11.5px;line-height:15.5px;color:#333;transform:scaleX(0.9048);">Profile Plane</span>
<div class="b" style="left:1747px;top:381.4px;width:131px;height:25.600000000000023px;background:#fff;border:1px solid #cfcfcf;border-radius:2px;box-sizing:border-box;"></div>
<span class="t" style="left:1770px;top:386.8px;font-size:11.5px;line-height:15.5px;color:#333;transform:scaleX(0.9152);">Symmetric</span>
<div class="b" style="left:1747px;top:411.3px;width:131px;height:25.69999999999999px;background:#fff;border:1px solid #cfcfcf;border-radius:2px;box-sizing:border-box;"></div>
<span class="t" style="left:1770px;top:416.7px;font-size:11.5px;line-height:15.5px;color:#333;transform:scaleX(0.9545);">All</span>
<div class="b" style="left:1747px;top:442.2px;width:131px;height:24.3px;background:#fff;border:1px solid #cfcfcf;border-radius:2px;box-sizing:border-box;"></div>
<span class="t" style="left:1750.5px;top:446.8px;font-size:11.5px;line-height:15.5px;color:#333;transform:scaleX(0.9252);">0.0 deg</span>
<div class="b" style="left:1663.5px;top:474.5px;width:233px;height:1px;background:#d4d4d4;"></div>
<div class="b" style="left:1747px;top:481.4px;width:131px;height:25.200000000000045px;background:#fff;border:1px solid #cfcfcf;border-radius:2px;box-sizing:border-box;"></div>
<span class="t" style="left:1770px;top:486.6px;font-size:11.5px;line-height:15.5px;color:#333;transform:scaleX(0.8941);">Cut</span>
<span class="t" style="left:1686.4px;top:516.5px;font-size:11.5px;line-height:15.5px;color:#333;font-weight:bold;transform:scaleX(0.9823);">Objects To Cut</span>
<div class="b" style="left:1662px;top:540px;width:248.5px;height:1px;background:#d0d0d0;"></div>
<div class="b" style="left:1769px;top:549px;width:60px;height:18.8px;background:#e1e1e1;border:1px solid #adadad;box-sizing:border-box;"></div>
<div class="b" style="left:1839.3px;top:549px;width:59.7px;height:18.8px;background:#e1e1e1;border:1px solid #adadad;box-sizing:border-box;"></div>
<span class="t" style="left:1790.5px;top:550.4px;font-size:12.5px;line-height:16.5px;color:#6a6a6a;transform:scaleX(0.9413);">OK</span>
<span class="t" style="left:1849.5px;top:550.4px;font-size:12.5px;line-height:16.5px;color:#6a6a6a;transform:scaleX(0.9894);">Cancel</span>
<svg class="b" style="left:1655px;top:260px;" width="268" height="320" viewBox="1655 260 268 320"><path d="M1664 270.500v11" stroke="#555" stroke-width="1"/><path d="M1665.800 272.500v7" stroke="#aaa" stroke-width="1"/><circle cx="1677.600" cy="276" r="4.700" fill="#222"/><rect x="1674.900" y="275.300" width="5.400" height="1.500" fill="#f0f0f0"/><path d="M1896.500 272.800l4.500 3.300-4.500 3.300zM1901 272.800l4.500 3.300-4.500 3.300z" fill="#222"/><g transform="translate(1757,303.500)"><path d="M-7.500-3.500l2.500-3.500h9.500l-2.500 3.500z" fill="#c9e4fa"/><path d="M2-3.500l2.500-3.500v10.500l-2.500 3.500z" fill="#7ab6ea"/><rect x="-7.500" y="-3.500" width="9.500" height="10.500" fill="#a5d0f5"/><path d="M-7.500 7h9.500l2.500-3.500v1.500l-2.500 3.500h-9.500z" fill="#e3e3e3"/><path d="M7.500-4.500v10" stroke="#fff" stroke-width="1.100"/><path d="M5.500-3.800l2-3.600 2 3.600z" fill="#fff"/></g><g transform="translate(1786,303.500)"><path d="M-7-4.500l2-3h3l1 .8 1.500-.8h3.500l-1.500 3.500v11l-3 .5-1.500-1-2 1-3-.5z" fill="#4a98dc"/><path d="M-7-4.500l2-3h3l1 .8 1.500-.8h3.500l-1.500 3.500h-3l-1.500.8-1.500-.8z" fill="#8cc6f4"/><path d="M-2.500-4v11" stroke="#2f6fb0" stroke-width=".8"/><path d="M7.500-4.500v10" stroke="#333" stroke-width="1.100"/><path d="M5.500-3.800l2-3.600 2 3.600z" fill="#333"/></g><path d="M1753.500 327v12l2.800-2.600 2 4.600 2-.9-2-4.500 3.700-.2z" fill="#fff6df" stroke="#777" stroke-width=".8"/><path d="M1836 330.500l8 8M1844 330.500l-8 8" stroke="#4a4a4a" stroke-width="1.700" fill="none"/><path d="M1866.500 362.15h6.400l-3.200 4.400z" fill="#222"/><g transform="translate(1758,364.15)"><path d="M-4-7v14" stroke="#1a2238" stroke-width="1.600"/><path d="M-4 -.3h6" stroke="#1a2238" stroke-width="1.200"/><path d="M1.200-3l3.800 2.700-3.800 2.700z" fill="#1a2238"/></g><path d="M1866.500 392.2h6.400l-3.200 4.400z" fill="#222"/><g transform="translate(1758,394.2)"><path d="M-5.500-5l6.500 5-6.500 6zM1 0l4.500-4.500-.5 11z" fill="#f0a274" opacity=".95"/><path d="M-7.500 7.500l14.500-14.500" stroke="#666" stroke-width="1.200"/><path d="M7.800-7.800l-4.600.9 3.700 3.700zM-8.200 8.200l4.600-.9-3.700-3.700z" fill="#666"/></g><path d="M1866.500 422.15h6.400l-3.200 4.400z" fill="#222"/><g transform="translate(1758,424.15)"><path d="M-3.700-8v5M3.700-8v5" stroke="#16233f" stroke-width="1.800"/><path d="M-7.500-1.300h12" stroke="#16233f" stroke-width="1.200"/><path d="M3.500-4l4 2.700-4 2.700z" fill="#16233f"/><path d="M-4.300 1.500v5h8.800v-5" fill="none" stroke="#16233f" stroke-width="1.800"/></g><path d="M1866.500 492.0h6.400l-3.200 4.400z" fill="#222"/><g transform="translate(1758,494.0)"><rect x="-3.500" y="-7" width="8" height="9" fill="#f2a0a8"/><path d="M-7-1v8h14.500v-8h-3v5h-8.500v-5z" fill="#3f8fd4"/></g><path d="M1671.500 518.800l6 4.700-6 4.700z" fill="#222"/><circle cx="1676" cy="558.800" r="6.200" fill="#111"/><rect x="1675" y="557.500" width="2" height="4.800" fill="#fff"/><circle cx="1676" cy="555.400" r="1.200" fill="#fff"/></svg>
<div class="b" style="left:0px;top:957px;width:299px;height:25px;background:#f1f1f1;border:1px solid #c9c9c9;border-left:none;border-bottom-color:#b5b5b5;box-sizing:border-box;"></div>
<span class="t" style="left:24.5px;top:961.5px;font-size:11px;line-height:15px;color:#5e5e5e;transform:scaleX(0.8727);">COMMENTS</span>
<svg class="b" style="left:276px;top:963px;" width="24" height="13" viewBox="0 0 24 13"><circle cx="6.300" cy="6.500" r="4.700" fill="#222"/><path d="M3.600 6.500h5.400M6.300 3.800v5.400" stroke="#f1f1f1" stroke-width="1.400"/><path d="M18.200 1v11" stroke="#555" stroke-width="1"/><path d="M20.300 3v7" stroke="#999" stroke-width="1"/></svg>
<div class="b" style="left:836px;top:958px;width:237px;height:24px;background:#f0f0f0;"></div>
<svg class="b" style="left:830px;top:955px;" width="250" height="30" viewBox="830 955 250 30"><g fill="none" stroke="#3c4a60" stroke-width="1.100"><ellipse cx="847" cy="969" rx="3.300" ry="7.500"/><path d="M841 966c-2.500 1-2.500 4.500 1 6M853.500 965.500c3 1.500 2.500 5.500-2.500 7"/><path d="M845.500 969h3M847 967.500v3" stroke-width=".9"/></g><path d="M839.300 968.200l2.200-2.600.6 3.200z" fill="#3c4a60"/><path d="M859.800 967.500h6.200l-3.100 4.300z" fill="#222"/><g fill="none" stroke="#444" stroke-width="1.200"><rect x="872.500" y="966.500" width="15" height="9.500" fill="#f4f4f4"/><path d="M874.500 966.500v-3l4 1.800 4-2.800 3 1.500v2.500"/></g><rect x="875.500" y="970" width="9" height="3" fill="#b9c0c8" stroke="#444" stroke-width=".9"/><path d="M901 969.500c-1.500-1.500-3-.5-2 1l3.500 5c1 1.500 2.500 2.500 5 2.500h2c2.500 0 3.500-2 3.500-4.500v-6c0-1.500-2-1.500-2 0v-2c0-1.500-2-1.500-2 0v-1c0-1.500-2-1.500-2 0v1c0-1.500-2.200-1.500-2.200 0v7z" fill="#fbfbfb" stroke="#333" stroke-width="1.100" stroke-linejoin="round"/><path d="M905.200 965.500v4M907.200 964.500v5M909.200 965.500v4" stroke="#333" stroke-width=".9"/><path d="M1031.800 967.500h6.200l-3.100 4.300z" fill="#222"/><g fill="#a9c4ea" stroke="#2f5fa8" stroke-width="1.200"><rect x="1045.700" y="963.700" width="6" height="5"/><rect x="1053.200" y="963.700" width="6" height="5"/><rect x="1045.700" y="970.200" width="6" height="5"/><rect x="1053.200" y="970.200" width="6" height="5"/></g><path d="M1062.800 967.500h6.200l-3.100 4.300z" fill="#222"/></svg>
<div class="b" style="left:0px;top:986px;width:1915px;height:54px;background:#f0f0f0;border-top:1px solid #d2d2d2;box-sizing:border-box;"></div>
<div class="b" style="left:953px;top:998px;width:24px;height:24px;background:#d6d6d6;"></div>
<div class="b" style="left:1121.5px;top:998px;width:24.5px;height:24px;background:#1b8ccb;"></div>
<svg class="b" style="left:0px;top:990px;" width="1914" height="49" viewBox="0 990 1914 49"><g fill="#464646"><rect x="6" y="1004" width="2.300" height="14"/><path d="M18 1004v14l-9.500-7z"/><path d="M40 1004.500v13l-9.500-6.500z"/><rect x="40.800" y="1008" width="2" height="6"/><path d="M56 1003v16l12-8z"/><path d="M82.500 1004.500v13l9.800-6.500z"/><rect x="79.700" y="1008" width="2" height="6"/><path d="M105.500 1004v14l9.500-7z"/><rect x="115.700" y="1004" width="2.300" height="14"/></g><path d="M149.500 1020.500v6.500h985" fill="none" stroke="#cbcbcb" stroke-width="1.400"/><rect x="142" y="1003" width="14" height="14" fill="#5db0f0"/><path d="M142 1012.500c1.200-2.500 2.500-3.800 4-3.800 1.700 0 2.500 2.200 4.200 3.800 1-1.200 2-2.200 3-2.200s2 1 2.800 2.500v4.200h-14z" fill="#2f86cc"/><circle cx="152" cy="1006.700" r="1.600" fill="#f4fbff"/><path d="M173 1021v5.500" stroke="#d0d0d0" stroke-width="1.300"/><rect x="166" y="1003" width="14" height="14" fill="#5db0f0"/><path d="M166 1012.500c1.200-2.500 2.500-3.800 4-3.800 1.700 0 2.500 2.200 4.200 3.800 1-1.200 2-2.200 3-2.200s2 1 2.800 2.500v4.200h-14z" fill="#2f86cc"/><circle cx="176" cy="1006.700" r="1.600" fill="#f4fbff"/><path d="M197 1021v5.500" stroke="#d0d0d0" stroke-width="1.300"/><g transform="translate(197,1010)"><path d="M-6.500-6.500h13M-6.500-6.500v13M-6.500 6.500h8M6.500-6.500v7" fill="none" stroke="#3c3c3c" stroke-width=".9" stroke-dasharray="4 1.800"/><g fill="#2a7fd0"><rect x="-7.500" y="-7.500" width="2" height="2"/><rect x="5.500" y="-7.500" width="2" height="2"/><rect x="-7.500" y="5.500" width="2" height="2"/></g><path d="M2 7.800l.5-2 3.700-3.700 1.700 1.700-3.700 3.700z" fill="#f3c54a"/><path d="M5.700 2.600l1.100-1.100 1.700 1.700-1.100 1.100z" fill="#e8404a"/><path d="M2 7.800l.5-2 1.500 1.500z" fill="#666"/></g><path d="M221 1021v5.500" stroke="#d0d0d0" stroke-width="1.300"/><g transform="translate(221,1010)"><path d="M-7.800 6.200h9.800l2.500-3.300v1.600l-2.500 3.400h-9.800z" fill="#c3cad2"/><path d="M-7.800-3.800c0-2.500 1.500-3.800 3.500-3.800h8.800v10.500l-2.500 3.300h-9.800z" fill="#5aa6e6"/><path d="M-7.500-4.500c.3-2 1.600-3.100 3.200-3.100h8.800l-2.500 3.400h-9.500z" fill="#8cc6f4" opacity=".8"/><path d="M2-4.200l2.500-3.400v10.500l-2.500 3.300z" fill="#3f8fd4" opacity=".8"/><path d="M6.700-5.500v9.800" stroke="#222" stroke-width="1"/><path d="M5-4.600l1.700-3 1.700 3z" fill="#222"/></g><path d="M245 1021v5.500" stroke="#d0d0d0" stroke-width="1.300"/><g transform="translate(245,1010)"><path d="M-6.500-6.500h13M-6.500-6.500v13M-6.500 6.500h8M6.500-6.500v7" fill="none" stroke="#3c3c3c" stroke-width=".9" stroke-dasharray="4 1.800"/><g fill="#2a7fd0"><rect x="-7.500" y="-7.500" width="2" height="2"/><rect x="5.500" y="-7.500" width="2" height="2"/><rect x="-7.500" y="5.500" width="2" height="2"/></g><path d="M2 7.800l.5-2 3.700-3.700 1.700 1.700-3.700 3.700z" fill="#f3c54a"/><path d="M5.700 2.600l1.100-1.100 1.700 1.700-1.100 1.100z" fill="#e8404a"/><path d="M2 7.800l.5-2 1.500 1.500z" fill="#666"/></g><path d="M269 1021v5.500" stroke="#d0d0d0" stroke-width="1.300"/><g transform="translate(269,1010)"><path d="M-7.800 6.200h9.800l2.500-3.300v1.600l-2.500 3.400h-9.800z" fill="#c3cad2"/><path d="M-7.800-3.800c0-2.500 1.500-3.800 3.500-3.800h8.800v10.500l-2.500 3.300h-9.800z" fill="#5aa6e6"/><path d="M-7.500-4.500c.3-2 1.600-3.100 3.200-3.100h8.800l-2.500 3.400h-9.500z" fill="#8cc6f4" opacity=".8"/><path d="M2-4.200l2.500-3.400v10.500l-2.500 3.300z" fill="#3f8fd4" opacity=".8"/><path d="M6.700-5.500v9.800" stroke="#222" stroke-width="1"/><path d="M5-4.600l1.700-3 1.700 3z" fill="#222"/></g><path d="M293 1021v5.500" stroke="#d0d0d0" stroke-width="1.300"/><g transform="translate(293,1010)"><path d="M-1.200-6.500v13.500h-6z" fill="#f6f6f6" stroke="#555" stroke-width="1"/><path d="M1.200-6.500v13.500h6.500z" fill="#4a98dc"/></g><path d="M317 1021v5.500" stroke="#d0d0d0" stroke-width="1.300"/><g transform="translate(317,1010)"><path d="M-6.500-6.500h13M-6.500-6.500v13M-6.500 6.500h8M6.500-6.500v7" fill="none" stroke="#3c3c3c" stroke-width=".9" stroke-dasharray="4 1.800"/><g fill="#2a7fd0"><rect x="-7.500" y="-7.500" width="2" height="2"/><rect x="5.500" y="-7.500" width="2" height="2"/><rect x="-7.500" y="5.500" width="2" height="2"/></g><path d="M2 7.800l.5-2 3.700-3.700 1.700 1.700-3.700 3.700z" fill="#f3c54a"/><path d="M5.700 2.600l1.100-1.100 1.700 1.700-1.100 1.100z" fill="#e8404a"/><path d="M2 7.800l.5-2 1.500 1.500z" fill="#666"/></g><path d="M341 1021v5.500" stroke="#d0d0d0" stroke-width="1.300"/><g transform="translate(341,1010)"><path d="M-7.800 6.200h9.800l2.500-3.300v1.600l-2.500 3.400h-9.800z" fill="#c3cad2"/><path d="M-7.800-3.800c0-2.500 1.500-3.800 3.500-3.800h8.800v10.500l-2.500 3.300h-9.800z" fill="#5aa6e6"/><path d="M-7.500-4.500c.3-2 1.600-3.100 3.200-3.100h8.800l-2.500 3.400h-9.500z" fill="#8cc6f4" opacity=".8"/><path d="M2-4.200l2.500-3.400v10.500l-2.500 3.300z" fill="#3f8fd4" opacity=".8"/><path d="M6.700-5.500v9.800" stroke="#222" stroke-width="1"/><path d="M5-4.600l1.700-3 1.700 3z" fill="#222"/></g><path d="M365 1021v5.500" stroke="#d0d0d0" stroke-width="1.300"/><g transform="translate(365,1010)"><path d="M-7.800 6.200h9.800l2.500-3.300v1.600l-2.500 3.400h-9.800z" fill="#c3cad2"/><path d="M-7.800-3.800c0-2.500 1.500-3.800 3.500-3.800h8.800v10.500l-2.500 3.300h-9.800z" fill="#5aa6e6"/><path d="M-7.500-4.500c.3-2 1.600-3.100 3.200-3.100h8.800l-2.500 3.400h-9.500z" fill="#8cc6f4" opacity=".8"/><path d="M2-4.200l2.500-3.400v10.500l-2.500 3.300z" fill="#3f8fd4" opacity=".8"/><path d="M6.700-5.500v9.800" stroke="#222" stroke-width="1"/><path d="M5-4.600l1.700-3 1.700 3z" fill="#222"/></g><path d="M389 1021v5.500" stroke="#d0d0d0" stroke-width="1.300"/><g transform="translate(389,1010)"><path d="M-1.200-6.500v13.500h-6z" fill="#f6f6f6" stroke="#555" stroke-width="1"/><path d="M1.200-6.500v13.500h6.500z" fill="#4a98dc"/></g><path d="M413 1021v5.500" stroke="#d0d0d0" stroke-width="1.300"/><g transform="translate(413,1010)"><path d="M-6.500-6.500h13M-6.500-6.500v13M-6.500 6.500h8M6.500-6.500v7" fill="none" stroke="#3c3c3c" stroke-width=".9" stroke-dasharray="4 1.800"/><g fill="#2a7fd0"><rect x="-7.500" y="-7.500" width="2" height="2"/><rect x="5.500" y="-7.500" width="2" height="2"/><rect x="-7.500" y="5.500" width="2" height="2"/></g><path d="M2 7.800l.5-2 3.700-3.700 1.700 1.700-3.700 3.700z" fill="#f3c54a"/><path d="M5.700 2.600l1.100-1.100 1.700 1.700-1.100 1.100z" fill="#e8404a"/><path d="M2 7.800l.5-2 1.500 1.500z" fill="#666"/></g><path d="M437 1021v5.500" stroke="#d0d0d0" stroke-width="1.300"/><g transform="translate(437,1010)"><path d="M-7.800 6.200h9.800l2.500-3.300v1.600l-2.500 3.400h-9.800z" fill="#c3cad2"/><path d="M-7.800-3.800c0-2.500 1.500-3.800 3.500-3.800h8.800v10.500l-2.500 3.300h-9.800z" fill="#5aa6e6"/><path d="M-7.500-4.500c.3-2 1.600-3.100 3.200-3.100h8.800l-2.500 3.400h-9.500z" fill="#8cc6f4" opacity=".8"/><path d="M2-4.200l2.500-3.400v10.500l-2.500 3.300z" fill="#3f8fd4" opacity=".8"/><path d="M6.700-5.500v9.800" stroke="#222" stroke-width="1"/><path d="M5-4.600l1.700-3 1.700 3z" fill="#222"/></g><path d="M461 1021v5.500" stroke="#d0d0d0" stroke-width="1.300"/><g transform="translate(461,1010)"><path d="M-7.800 6.200h9.800l2.500-3.300v1.600l-2.500 3.400h-9.800z" fill="#c3cad2"/><path d="M-7.800-3.800c0-2.500 1.500-3.800 3.500-3.800h8.800v10.500l-2.500 3.300h-9.800z" fill="#5aa6e6"/><path d="M-7.500-4.500c.3-2 1.600-3.100 3.200-3.100h8.800l-2.500 3.400h-9.500z" fill="#8cc6f4" opacity=".8"/><path d="M2-4.200l2.500-3.400v10.500l-2.500 3.300z" fill="#3f8fd4" opacity=".8"/><path d="M6.700-5.500v9.800" stroke="#222" stroke-width="1"/><path d="M5-4.600l1.700-3 1.700 3z" fill="#222"/></g><path d="M485 1021v5.500" stroke="#d0d0d0" stroke-width="1.300"/><g transform="translate(485,1010)"><path d="M-6.500-6.500h13M-6.500-6.500v13M-6.500 6.500h8M6.500-6.500v7" fill="none" stroke="#3c3c3c" stroke-width=".9" stroke-dasharray="4 1.800"/><g fill="#2a7fd0"><rect x="-7.500" y="-7.500" width="2" height="2"/><rect x="5.500" y="-7.500" width="2" height="2"/><rect x="-7.500" y="5.500" width="2" height="2"/></g><path d="M2 7.800l.5-2 3.700-3.700 1.700 1.700-3.700 3.700z" fill="#f3c54a"/><path d="M5.700 2.600l1.100-1.100 1.700 1.700-1.100 1.100z" fill="#e8404a"/><path d="M2 7.800l.5-2 1.500 1.500z" fill="#666"/></g><path d="M509 1021v5.500" stroke="#d0d0d0" stroke-width="1.300"/><g transform="translate(509,1010)"><path d="M-7.800 6.200h9.800l2.500-3.300v1.600l-2.500 3.400h-9.800z" fill="#c3cad2"/><path d="M-7.800-3.800c0-2.500 1.500-3.800 3.500-3.800h8.800v10.500l-2.500 3.300h-9.800z" fill="#5aa6e6"/><path d="M-7.500-4.500c.3-2 1.600-3.100 3.200-3.100h8.800l-2.500 3.400h-9.500z" fill="#8cc6f4" opacity=".8"/><path d="M2-4.200l2.500-3.400v10.500l-2.500 3.300z" fill="#3f8fd4" opacity=".8"/><path d="M6.700-5.500v9.800" stroke="#222" stroke-width="1"/><path d="M5-4.600l1.700-3 1.700 3z" fill="#222"/></g><path d="M533 1021v5.500" stroke="#d0d0d0" stroke-width="1.300"/><g transform="translate(533,1010)"><path d="M-7.800 6.200h9.800l2.500-3.300v1.600l-2.500 3.400h-9.800z" fill="#c3cad2"/><path d="M-7.800-3.800c0-2.500 1.500-3.800 3.500-3.800h8.800v10.500l-2.500 3.300h-9.800z" fill="#5aa6e6"/><path d="M-7.500-4.500c.3-2 1.600-3.100 3.200-3.100h8.800l-2.500 3.400h-9.500z" fill="#8cc6f4" opacity=".8"/><path d="M2-4.200l2.500-3.400v10.500l-2.500 3.300z" fill="#3f8fd4" opacity=".8"/><path d="M6.700-5.500v9.800" stroke="#222" stroke-width="1"/><path d="M5-4.600l1.700-3 1.700 3z" fill="#222"/></g><path d="M557 1021v5.500" stroke="#d0d0d0" stroke-width="1.300"/><g transform="translate(557,1010)"><path d="M-1.200-6.500v13.500h-6z" fill="#f6f6f6" stroke="#555" stroke-width="1"/><path d="M1.200-6.500v13.500h6.500z" fill="#4a98dc"/></g><path d="M581 1021v5.500" stroke="#d0d0d0" stroke-width="1.300"/><g transform="translate(581,1010)"><path d="M-1.200-6.500v13.500h-6z" fill="#f6f6f6" stroke="#555" stroke-width="1"/><path d="M1.200-6.500v13.500h6.500z" fill="#4a98dc"/></g><path d="M605 1021v5.500" stroke="#d0d0d0" stroke-width="1.300"/><g transform="translate(605,1010)"><path d="M-4.500-.5l5.500-7.500 7 7-6 7z" fill="#e0853f"/><path d="M-7.500 1.500l2.500-3h4l2.500 3v6h-9z" fill="#e2e2e2" stroke="#666" stroke-width=".9"/><path d="M-.5-2.500l3.500-1-2.500 6.500z" fill="#e9e0c8"/><path d="M.5 3l2.500-6.500v6l-1.500 3z" fill="#38b56d"/></g><path d="M629 1021v5.500" stroke="#d0d0d0" stroke-width="1.300"/><g transform="translate(629,1010)"><path d="M-6.500-6.500h13M-6.500-6.500v13M-6.500 6.500h8M6.500-6.500v7" fill="none" stroke="#3c3c3c" stroke-width=".9" stroke-dasharray="4 1.800"/><g fill="#2a7fd0"><rect x="-7.500" y="-7.500" width="2" height="2"/><rect x="5.500" y="-7.500" width="2" height="2"/><rect x="-7.500" y="5.500" width="2" height="2"/></g><path d="M2 7.800l.5-2 3.700-3.700 1.700 1.700-3.700 3.700z" fill="#f3c54a"/><path d="M5.700 2.600l1.100-1.100 1.700 1.700-1.100 1.100z" fill="#e8404a"/><path d="M2 7.800l.5-2 1.500 1.500z" fill="#666"/></g><path d="M653 1021v5.500" stroke="#d0d0d0" stroke-width="1.300"/><g transform="translate(653,1010)"><path d="M-7.800 6.200h9.800l2.500-3.300v1.600l-2.500 3.400h-9.800z" fill="#c3cad2"/><path d="M-7.800-3.800c0-2.500 1.500-3.800 3.500-3.800h8.800v10.500l-2.500 3.300h-9.800z" fill="#5aa6e6"/><path d="M-7.500-4.500c.3-2 1.600-3.100 3.200-3.100h8.800l-2.500 3.400h-9.500z" fill="#8cc6f4" opacity=".8"/><path d="M2-4.200l2.500-3.400v10.500l-2.500 3.300z" fill="#3f8fd4" opacity=".8"/><path d="M6.700-5.500v9.800" stroke="#222" stroke-width="1"/><path d="M5-4.600l1.700-3 1.700 3z" fill="#222"/></g><path d="M677 1021v5.500" stroke="#d0d0d0" stroke-width="1.300"/><g transform="translate(677,1010)"><path d="M-6.500-6.500h13M-6.500-6.500v13M-6.500 6.500h8M6.500-6.500v7" fill="none" stroke="#3c3c3c" stroke-width=".9" stroke-dasharray="4 1.800"/><g fill="#2a7fd0"><rect x="-7.500" y="-7.500" width="2" height="2"/><rect x="5.500" y="-7.500" width="2" height="2"/><rect x="-7.500" y="5.500" width="2" height="2"/></g><path d="M2 7.800l.5-2 3.700-3.700 1.700 1.700-3.700 3.700z" fill="#f3c54a"/><path d="M5.700 2.600l1.100-1.100 1.700 1.700-1.100 1.100z" fill="#e8404a"/><path d="M2 7.800l.5-2 1.500 1.500z" fill="#666"/></g><path d="M701 1021v5.500" stroke="#d0d0d0" stroke-width="1.300"/><g transform="translate(701,1010)"><path d="M-7.800 6.200h9.800l2.500-3.300v1.600l-2.500 3.400h-9.800z" fill="#c3cad2"/><path d="M-7.800-3.800c0-2.500 1.500-3.800 3.500-3.800h8.800v10.500l-2.500 3.300h-9.800z" fill="#5aa6e6"/><path d="M-7.500-4.500c.3-2 1.600-3.100 3.200-3.100h8.800l-2.500 3.400h-9.500z" fill="#8cc6f4" opacity=".8"/><path d="M2-4.200l2.500-3.400v10.500l-2.500 3.300z" fill="#3f8fd4" opacity=".8"/><path d="M6.700-5.500v9.800" stroke="#222" stroke-width="1"/><path d="M5-4.600l1.700-3 1.700 3z" fill="#222"/></g><path d="M725 1021v5.500" stroke="#d0d0d0" stroke-width="1.300"/><g transform="translate(725,1010)"><path d="M-1.200-6.500v13.500h-6z" fill="#f6f6f6" stroke="#555" stroke-width="1"/><path d="M1.200-6.500v13.500h6.500z" fill="#4a98dc"/></g><path d="M749 1021v5.500" stroke="#d0d0d0" stroke-width="1.300"/><g transform="translate(749,1010)"><path d="M-4.500-.5l5.500-7.500 7 7-6 7z" fill="#e0853f"/><path d="M-7.500 1.500l2.500-3h4l2.500 3v6h-9z" fill="#e2e2e2" stroke="#666" stroke-width=".9"/><path d="M-.5-2.500l3.500-1-2.500 6.500z" fill="#e9e0c8"/><path d="M.5 3l2.500-6.500v6l-1.500 3z" fill="#38b56d"/></g><path d="M773 1021v5.500" stroke="#d0d0d0" stroke-width="1.300"/><g transform="translate(773,1010)"><path d="M-6.500-6.500h13M-6.500-6.500v13M-6.500 6.500h8M6.500-6.500v7" fill="none" stroke="#3c3c3c" stroke-width=".9" stroke-dasharray="4 1.800"/><g fill="#2a7fd0"><rect x="-7.500" y="-7.500" width="2" height="2"/><rect x="5.500" y="-7.500" width="2" height="2"/><rect x="-7.500" y="5.500" width="2" height="2"/></g><path d="M2 7.800l.5-2 3.700-3.700 1.700 1.700-3.700 3.700z" fill="#f3c54a"/><path d="M5.700 2.600l1.100-1.100 1.700 1.700-1.100 1.100z" fill="#e8404a"/><path d="M2 7.800l.5-2 1.500 1.500z" fill="#666"/></g><path d="M797 1021v5.500" stroke="#d0d0d0" stroke-width="1.300"/><g transform="translate(797,1010)"><path d="M-6.500-6.500h13M-6.500-6.500v13M-6.500 6.500h8M6.500-6.500v7" fill="none" stroke="#3c3c3c" stroke-width=".9" stroke-dasharray="4 1.800"/><g fill="#2a7fd0"><rect x="-7.500" y="-7.500" width="2" height="2"/><rect x="5.500" y="-7.500" width="2" height="2"/><rect x="-7.500" y="5.500" width="2" height="2"/></g><path d="M2 7.800l.5-2 3.700-3.700 1.700 1.700-3.700 3.700z" fill="#f3c54a"/><path d="M5.700 2.600l1.100-1.100 1.700 1.700-1.100 1.100z" fill="#e8404a"/><path d="M2 7.800l.5-2 1.500 1.500z" fill="#666"/></g><path d="M821 1021v5.500" stroke="#d0d0d0" stroke-width="1.300"/><g transform="translate(821,1010)"><path d="M-7.500-6.500h15.500l-3 10h-3.500a3.500 3.500 0 0 0-6 0h-0z" fill="#4f9fe2"/><path d="M-7.500-6.500h15.500l-.8 2.500h-14z" fill="#8cc6f4"/><circle cx="-1.500" cy="4.500" r="3.400" fill="#f6f6f6" stroke="#444" stroke-width="1"/></g><path d="M845 1021v5.500" stroke="#d0d0d0" stroke-width="1.300"/><g transform="translate(845,1010)"><path d="M-7.500-6.500h15.500l-3 10h-3.500a3.500 3.500 0 0 0-6 0h-0z" fill="#4f9fe2"/><path d="M-7.500-6.500h15.500l-.8 2.500h-14z" fill="#8cc6f4"/><circle cx="-1.500" cy="4.500" r="3.400" fill="#f6f6f6" stroke="#444" stroke-width="1"/></g><path d="M869 1021v5.500" stroke="#d0d0d0" stroke-width="1.300"/><g transform="translate(869,1010)"><path d="M-1.200-6.500v13.500h-6z" fill="#f6f6f6" stroke="#555" stroke-width="1"/><path d="M1.200-6.500v13.500h6.500z" fill="#4a98dc"/></g><path d="M893 1021v5.500" stroke="#d0d0d0" stroke-width="1.300"/><g transform="translate(893,1010)"><path d="M-6.500-6.500h13M-6.500-6.500v13M-6.500 6.500h8M6.500-6.500v7" fill="none" stroke="#3c3c3c" stroke-width=".9" stroke-dasharray="4 1.800"/><g fill="#2a7fd0"><rect x="-7.500" y="-7.500" width="2" height="2"/><rect x="5.500" y="-7.500" width="2" height="2"/><rect x="-7.500" y="5.500" width="2" height="2"/></g><path d="M2 7.800l.5-2 3.700-3.700 1.700 1.700-3.700 3.700z" fill="#f3c54a"/><path d="M5.700 2.600l1.100-1.100 1.700 1.700-1.100 1.100z" fill="#e8404a"/><path d="M2 7.800l.5-2 1.500 1.500z" fill="#666"/></g><path d="M917 1021v5.500" stroke="#d0d0d0" stroke-width="1.300"/><g transform="translate(917,1010)"><path d="M-7.800 6.200h9.800l2.500-3.300v1.600l-2.500 3.400h-9.800z" fill="#c3cad2"/><path d="M-7.800-3.800c0-2.500 1.500-3.800 3.500-3.800h8.800v10.500l-2.500 3.300h-9.800z" fill="#5aa6e6"/><path d="M-7.500-4.500c.3-2 1.600-3.100 3.200-3.100h8.800l-2.500 3.400h-9.500z" fill="#8cc6f4" opacity=".8"/><path d="M2-4.200l2.500-3.400v10.500l-2.500 3.300z" fill="#3f8fd4" opacity=".8"/><path d="M6.700-5.500v9.800" stroke="#222" stroke-width="1"/><path d="M5-4.600l1.700-3 1.700 3z" fill="#222"/></g><path d="M941 1021v5.500" stroke="#d0d0d0" stroke-width="1.300"/><g transform="translate(941,1010)"><path d="M-1.200-6.500v13.500h-6z" fill="#f6f6f6" stroke="#555" stroke-width="1"/><path d="M1.200-6.500v13.500h6.500z" fill="#4a98dc"/></g><path d="M965 1021v5.500" stroke="#d0d0d0" stroke-width="1.300"/><g transform="translate(965,1010)"><path d="M-7-3.500l3-3.500h3c5 0 8.500 3.500 8.500 8v3.500l-3 2.500h-11.500z" fill="#e9e9e9" stroke="#666" stroke-width="1"/><path d="M-2-5l1.500-2c5 0 8 3.500 8 8l-3 2.500c0-4.500-2-7.500-6.500-8.500z" fill="#5a9fdc"/></g><path d="M989 1021v5.500" stroke="#d0d0d0" stroke-width="1.300"/><g transform="translate(989,1010)"><path d="M-6.500-6.500h13M-6.500-6.500v13M-6.500 6.500h8M6.500-6.500v7" fill="none" stroke="#3c3c3c" stroke-width=".9" stroke-dasharray="4 1.800"/><g fill="#2a7fd0"><rect x="-7.500" y="-7.500" width="2" height="2"/><rect x="5.500" y="-7.500" width="2" height="2"/><rect x="-7.500" y="5.500" width="2" height="2"/></g><path d="M2 7.800l.5-2 3.700-3.700 1.700 1.700-3.700 3.700z" fill="#f3c54a"/><path d="M5.700 2.600l1.100-1.100 1.700 1.700-1.100 1.100z" fill="#e8404a"/><path d="M2 7.800l.5-2 1.500 1.500z" fill="#666"/></g><path d="M1013 1021v5.500" stroke="#d0d0d0" stroke-width="1.300"/><g transform="translate(1013,1010)"><path d="M-7.800 6.200h9.800l2.500-3.300v1.600l-2.500 3.400h-9.800z" fill="#c3cad2"/><path d="M-7.800-3.800c0-2.500 1.500-3.800 3.500-3.800h8.800v10.500l-2.500 3.300h-9.800z" fill="#5aa6e6"/><path d="M-7.500-4.500c.3-2 1.600-3.100 3.200-3.100h8.800l-2.500 3.400h-9.500z" fill="#8cc6f4" opacity=".8"/><path d="M2-4.200l2.500-3.400v10.500l-2.500 3.300z" fill="#3f8fd4" opacity=".8"/><path d="M6.700-5.500v9.800" stroke="#222" stroke-width="1"/><path d="M5-4.600l1.700-3 1.700 3z" fill="#222"/></g><path d="M1037 1021v5.500" stroke="#d0d0d0" stroke-width="1.300"/><g transform="translate(1037,1010)"><path d="M-7.800 6.200h9.800l2.500-3.300v1.600l-2.500 3.400h-9.800z" fill="#c3cad2"/><path d="M-7.800-3.800c0-2.500 1.500-3.800 3.500-3.800h8.800v10.500l-2.500 3.300h-9.800z" fill="#5aa6e6"/><path d="M-7.500-4.500c.3-2 1.600-3.100 3.200-3.100h8.800l-2.500 3.400h-9.500z" fill="#8cc6f4" opacity=".8"/><path d="M2-4.200l2.500-3.400v10.500l-2.500 3.300z" fill="#3f8fd4" opacity=".8"/><path d="M6.700-5.500v9.800" stroke="#222" stroke-width="1"/><path d="M5-4.600l1.700-3 1.700 3z" fill="#222"/></g><path d="M1061 1021v5.500" stroke="#d0d0d0" stroke-width="1.300"/><g transform="translate(1061,1010)"><path d="M-1.200-6.500v13.500h-6z" fill="#f6f6f6" stroke="#555" stroke-width="1"/><path d="M1.200-6.500v13.500h6.500z" fill="#4a98dc"/></g><path d="M1085 1021v5.500" stroke="#d0d0d0" stroke-width="1.300"/><g transform="translate(1085,1010)"><path d="M-1.200-6.500v13.500h-6z" fill="#f6f6f6" stroke="#555" stroke-width="1"/><path d="M1.200-6.500v13.500h6.500z" fill="#4a98dc"/></g><path d="M1109 1021v5.500" stroke="#d0d0d0" stroke-width="1.300"/><g transform="translate(1109,1010)"><path d="M-1.200-6.500v13.500h-6z" fill="#f6f6f6" stroke="#555" stroke-width="1"/><path d="M1.200-6.500v13.500h6.500z" fill="#4a98dc"/></g><path d="M1133 1021v5.500" stroke="#d0d0d0" stroke-width="1.300"/><g transform="translate(1133,1010)"><path d="M-6.500-6.500h13M-6.500-6.500v13M-6.500 6.500h8M6.500-6.500v7" fill="none" stroke="#3c3c3c" stroke-width=".9" stroke-dasharray="4 1.800"/><g fill="#2a7fd0"><rect x="-7.500" y="-7.500" width="2" height="2"/><rect x="5.500" y="-7.500" width="2" height="2"/><rect x="-7.500" y="5.500" width="2" height="2"/></g><path d="M2 7.800l.5-2 3.700-3.700 1.700 1.700-3.700 3.700z" fill="#f3c54a"/><path d="M5.700 2.600l1.100-1.100 1.700 1.700-1.100 1.100z" fill="#e8404a"/><path d="M2 7.800l.5-2 1.500 1.500z" fill="#666"/></g><path d="M1146 999v29.500" stroke="#3c3c3c" stroke-width="1.600"/><path d="M1137.500 996.500h9.300v9.500z" fill="#3c3c3c"/><path d="M1902.00 1009.21 L1902.00 1012.79 L1899.43 1013.30 L1899.47 1013.22 L1900.92 1015.39 L1898.39 1017.92 L1896.22 1016.47 L1896.30 1016.43 L1895.79 1019.00 L1892.21 1019.00 L1891.70 1016.43 L1891.78 1016.47 L1889.61 1017.92 L1887.08 1015.39 L1888.53 1013.22 L1888.57 1013.30 L1886.00 1012.79 L1886.00 1009.21 L1888.57 1008.70 L1888.53 1008.78 L1887.08 1006.61 L1889.61 1004.08 L1891.78 1005.53 L1891.70 1005.57 L1892.21 1003.00 L1895.79 1003.00 L1896.30 1005.57 L1896.22 1005.53 L1898.39 1004.08 L1900.92 1006.61 L1899.47 1008.78 L1899.43 1008.70Z" fill="#8c8c8c"/><circle cx="1894" cy="1011" r="2.800" fill="#f0f0f0"/></svg>
<div class="b" style="left:916px;top:927px;width:114px;height:55px;background:#555;border-radius:7px;"></div>
<svg class="b" style="left:960px;top:981px;" width="26" height="13" viewBox="0 0 26 13"><path d="M1.500 0h22l-11 12z" fill="#555"/></svg>
<div class="b" style="left:923.5px;top:957px;width:99px;height:1.6px;background:#8a8a8a;"></div>
<svg class="b" style="left:924px;top:934px;" width="19" height="18" viewBox="0 0 19 18"><path d="M1.500 5.500l3.500-4h3c5 0 8.500 3.500 8.500 8v3.500l-3 3h-12z" fill="#dedede"/><path d="M5.500 3l2-2.500c5.500 0 9 3.500 9 8.500l-3 3c0-5-2.500-8-8-9z" fill="#4a9ae0"/></svg>
<span class="t" style="left:950px;top:936.0px;font-size:12px;line-height:16px;color:#fff;transform:scaleX(0.8903);">Fillet1</span>
<span class="t" style="left:924.5px;top:960.8px;font-size:12.5px;line-height:16.5px;color:#fff;transform:scaleX(0.8545);">60&quot; Fusion Stick v14</span>
<div class="b" style="left:0px;top:1039.3px;width:1917px;height:2px;background:#1c1c1c;"></div>
<div class="b" style="left:0px;top:1039.3px;width:43px;height:2px;background:#000;"></div>
<div class="b" style="left:872px;top:1039.3px;width:48px;height:2px;background:#c8702a;"></div>
<div class="b" style="left:1917px;top:0px;width:6px;height:1041px;background:#fff;"></div>
<div class="b" style="left:1914.8px;top:0px;width:2.3px;height:1041px;background:#000;"></div>
<div class="b" style="left:1914.8px;top:3px;width:2.3px;height:13px;background:#f3d27a;"></div>
<div class="b" style="left:1914.8px;top:21px;width:2.3px;height:26.5px;background:#1f66b8;"></div>
<svg class="b" style="left:1860px;top:375px;" width="63" height="70" viewBox="1860 375 63 70"><g fill="none" stroke="#1010c8" stroke-width="1.900" stroke-linecap="round" stroke-linejoin="round"><path d="M1917.300 393.500c-4-1.500-8-2-12-1.600s-8 2-12 2.100c-5 .3-10 .2-19.500-1c5-3 10.500-7 15.400-8.400c1.800 0 1.800 1.800 1.200 3.100c-1.500 2.500-4.500 4.300-7.400 5.300"/><path d="M1873.800 393c-.8 3-1.800 6-2.300 8.500c2 2.200 4.500 3.200 7 3.500c4 .9 8 1.200 12 1.200c5 0 9.500-.2 14.500-.4"/><path d="M1882.300 415.400c-.5 4-.9 7.500-1.100 11.500c0 2.500.1 4.800.3 6.900c4 .5 7.500 1 10.800 1.600c3.500.5 7 1 10.700 1.500"/><path d="M1882 427.300c4 0 8-.3 11.800-.8c4-.6 8-1.800 11.600-3.500c3-1.300 5.800-2.700 8.400-3.800c3-1.400 6-2.400 9.200-3"/></g></svg>
</body></html>
